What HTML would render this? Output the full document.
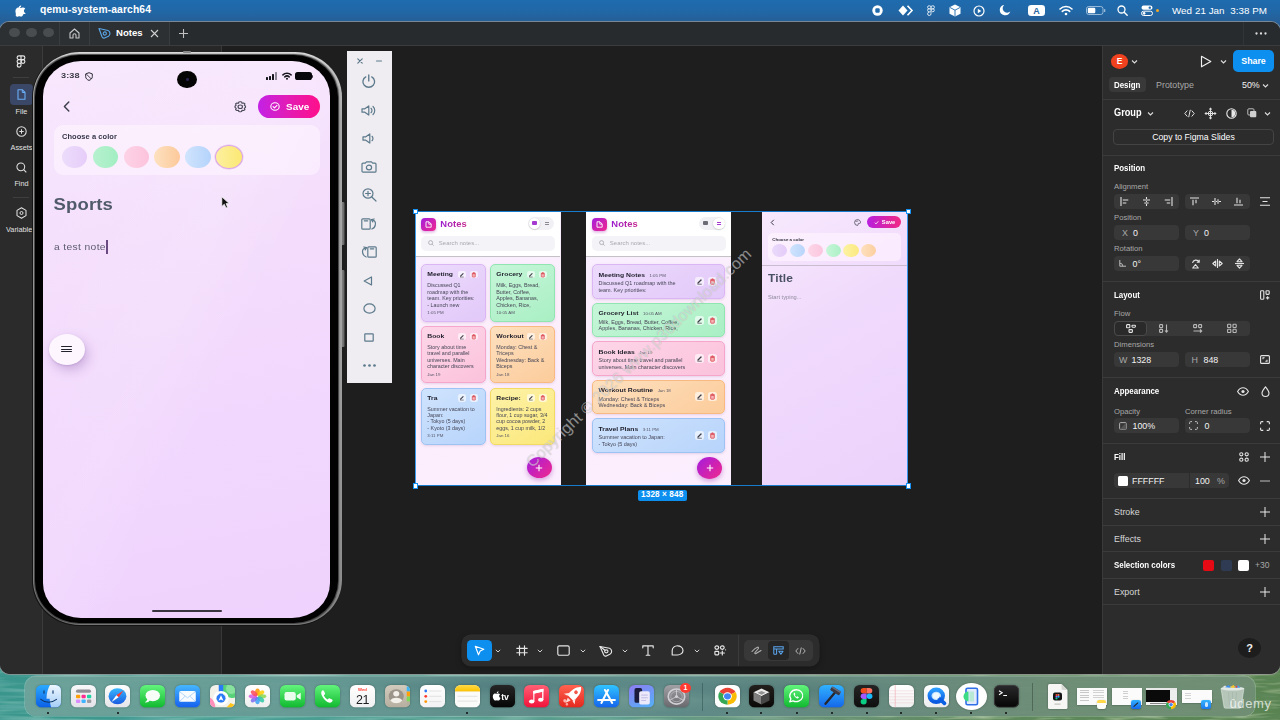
<!DOCTYPE html>
<html><head><meta charset="utf-8">
<style>
*{box-sizing:border-box;margin:0;padding:0}
html,body{width:1280px;height:720px;overflow:hidden}
body{font-family:"Liberation Sans",sans-serif;position:relative;background:#4a9a8e;color:#fff}
.abs{position:absolute}
svg{position:absolute;overflow:visible}
.lab{left:0;width:43px;text-align:center;font-size:7.300px;color:#e0e0e0;white-space:nowrap}
#rail{overflow:hidden}
.tx{font-size:8.900px;line-height:14px;height:14px;white-space:nowrap;color:#f2f2f2;letter-spacing:0;margin-top:.2px}
.tx.b{font-weight:bold;color:#fff;letter-spacing:0;font-size:8.600px;transform:scaleX(.92);transform-origin:0 50%}
.tx.g{color:#a8a8a8}
.tx.l{color:#d6d6d6}
.tx.s{font-size:7.700px;letter-spacing:0;margin-top:.2px}
.ct{white-space:nowrap;transform:scaleY(.89);transform-origin:0 50%}
#canvas{position:absolute;left:0;top:0;width:0;height:0}
/* wallpaper */
#wall{position:absolute;left:0;top:0;width:1280px;height:720px;background:linear-gradient(90deg,#3f9c92 0%,#4fa093 25%,#5b9a84 50%,#5e8f6c 75%,#5a7f52 100%)}
/* menubar */
#menubar{position:absolute;left:0;top:0;width:1280px;height:34px;background:linear-gradient(180deg,#1e6bae 0px,#2167a6 12px,#265e96 22px,#2a5a8c 34px)}
#menubar .t{position:absolute;top:4px;font-size:10px;font-weight:bold;color:#fff;white-space:nowrap}
/* window */
#win{position:absolute;left:0;top:22px;width:1280px;height:652px;background:#1e1e1e;border-radius:9px 9px 10px 10px;overflow:hidden;box-shadow:0 0 0 1px rgba(150,150,150,.75)}
#tabbar{position:absolute;left:0;top:0;width:1280px;height:24px;background:linear-gradient(90deg,#2c3032 0,#2c3032 169px,#272b2d 169px,#272b2d 100%);border-bottom:1px solid #3a3c3e}
#rail{position:absolute;left:0;top:24px;width:43px;height:628px;background:#2b2b2b;border-right:1px solid #3b3b3b}
#lpanel{position:absolute;left:43px;top:24px;width:179px;height:628px;background:#272727;border-right:1px solid #383838}
#rpanel{position:absolute;left:1102px;top:24px;width:178px;height:628px;background:#2c2c2c;border-left:1px solid #3a3a3a;font-size:9.5px;color:#fff}
</style></head><body>
<div id="wall">
<svg style="left:0;top:660px" width="1280" height="60" viewBox="0 0 1280 60">
<defs>
<linearGradient id="wg" x1="0" y1="0" x2="1" y2="0"><stop offset="0" stop-color="#3a968c"/><stop offset=".22" stop-color="#4a9f93"/><stop offset=".45" stop-color="#5f9e8c"/><stop offset=".62" stop-color="#6a9478"/><stop offset=".8" stop-color="#5f8a5c"/><stop offset="1" stop-color="#5a8452"/></linearGradient>
<filter id="wn" x="0" y="0" width="100%" height="100%"><feTurbulence type="fractalNoise" baseFrequency="0.015 0.22" numOctaves="2" seed="4"/><feColorMatrix type="matrix" values="0 0 0 0 .85  0 0 0 0 1  0 0 0 0 .95  1.600 0 0 0 -.62"/></filter>
<filter id="wd" x="0" y="0" width="100%" height="100%"><feTurbulence type="fractalNoise" baseFrequency="0.018 0.2" numOctaves="2" seed="11"/><feColorMatrix type="matrix" values="0 0 0 0 .05  0 0 0 0 .3  0 0 0 0 .3  1.500 0 0 0 -.6"/></filter>
<filter id="wf" x="0" y="0" width="100%" height="100%"><feTurbulence type="fractalNoise" baseFrequency="0.035 0.22" numOctaves="3" seed="7"/><feColorMatrix type="matrix" values="0 0 0 0 .12  0 0 0 0 .25  0 0 0 0 .12  2 0 0 0 -.8"/></filter>
<filter id="wl" x="0" y="0" width="100%" height="100%"><feTurbulence type="fractalNoise" baseFrequency="0.03 0.3" numOctaves="2" seed="21"/><feColorMatrix type="matrix" values="0 0 0 0 .78  0 0 0 0 .85  0 0 0 0 .6  2 0 0 0 -.95"/></filter>
<linearGradient id="mL" x1="0" y1="0" x2="1" y2="0"><stop offset="0" stop-color="#fff"/><stop offset=".5" stop-color="#fff"/><stop offset=".7" stop-color="#000"/></linearGradient>
<linearGradient id="mR" x1="0" y1="0" x2="1" y2="0"><stop offset=".55" stop-color="#000"/><stop offset=".75" stop-color="#fff"/></linearGradient>
<mask id="mkL"><rect width="1280" height="60" fill="url(#mL)"/></mask>
<mask id="mkR"><rect width="1280" height="60" fill="url(#mR)"/></mask>
</defs>
<rect width="1280" height="60" fill="url(#wg)"/>
<g mask="url(#mkL)"><rect width="1280" height="60" filter="url(#wn)" opacity=".55"/><rect width="1280" height="60" filter="url(#wd)" opacity=".5"/></g>
<g mask="url(#mkR)"><rect width="1280" height="60" filter="url(#wf)" opacity=".7"/><rect width="1280" height="60" filter="url(#wl)" opacity=".6"/></g>
</svg>
</div>
<div id="menubar">
<svg style="left:15.300px;top:4.600px" width="10.200" height="11.800" viewBox="0 0 170 200" preserveAspectRatio="none"><path fill="#fff" d="M150 146c-3 8-7 15-12 22-6 9-12 16-15 19-6 6-13 9-20 9-5 0-11-1-18-4s-13-4-19-4-13 1-20 4-12 5-17 5c-7 0-14-3-21-10-4-4-10-11-16-21C5 155 0 143-3 130c-4-15-6-29-6-43 0-16 3-29 10-41 5-9 13-16 22-22s19-8 29-8c6 0 13 2 22 5 9 3 15 5 18 5 2 0 9-2 20-6 11-4 20-5 27-5 20 2 35 9 45 23-18 11-27 26-26 45 0 15 6 28 16 38 5 5 10 8 16 11-1 4-3 7-4 11zM104-22c0 12-4 23-13 33-10 12-23 19-36 18v-4c0-11 5-23 13-33 4-5 10-9 17-12s13-5 19-5c0 1 0 2 0 3z" transform="translate(15,30) scale(.85)"/></svg>
<div class="t" style="left:40px;top:4px;font-size:10.3px;letter-spacing:.12px">qemu-system-aarch64</div>
<!-- right icons -->
<svg style="left:872px;top:5px" width="11" height="11" viewBox="0 0 11 11"><circle cx="5.5" cy="5.5" r="5.2" fill="#fff"/><rect x="3.3" y="3.3" width="4.4" height="4.4" rx="1.2" fill="#2069ab"/></svg>
<svg style="left:898px;top:5px" width="15" height="11" viewBox="0 0 15 11"><path d="M5 .5 9.5 5.5 5 10.500.5 5.500z" fill="#fff"/><path d="M9.500.8 14 5.500 9.500 10.200" fill="none" stroke="#fff" stroke-width="1.600"/></svg>
<svg style="left:927px;top:5px" width="9" height="11" viewBox="0 0 9 11"><g fill="none" stroke="#fff" stroke-width="1" opacity=".85"><rect x=".6" y=".8" width="3.400" height="3" rx="1.400"/><rect x="4" y=".8" width="3.400" height="3" rx="1.400"/><rect x=".6" y="3.800" width="3.400" height="3" rx="1.400"/><path d="M4 6.800v2a1.700 1.700 0 1 1-1.700-1.700"/><circle cx="5.800" cy="5.300" r="1.500"/></g></svg>
<svg style="left:949px;top:4px" width="12" height="13" viewBox="0 0 12 13"><path d="M6 .5 11.500 3.200v6.600L6 12.500.5 9.800V3.200z" fill="#fff"/><path d="M.8 3.400 6 6.200l5.200-2.800M6 6.200v6" stroke="#2069ab" stroke-width=".9" fill="none"/></svg>
<svg style="left:973px;top:4.500px" width="12" height="12" viewBox="0 0 12 12"><circle cx="6" cy="6" r="5" fill="none" stroke="#fff" stroke-width="1.200"/><path d="M4.800 3.800 8.300 6 4.800 8.200z" fill="#fff"/></svg>
<svg style="left:999px;top:4px" width="12" height="12" viewBox="0 0 12 12"><path d="M5.200.9A5.400 5.200 0 1 0 11.300 7.600 4.300 4.200 0 0 1 5.200.9z" fill="#fff"/></svg>
<div class="abs" style="left:1028px;top:4.700px;width:17px;height:11.600px;border-radius:3.300px;background:#fff;color:#2a66a3;font-size:9px;font-weight:bold;text-align:center;line-height:12px">A</div>
<svg style="left:1059px;top:4.500px" width="14" height="11" viewBox="0 0 14 11"><g fill="none" stroke="#fff" stroke-width="1.600" stroke-linecap="round"><path d="M1 4A8.500 8.500 0 0 1 13 4"/><path d="M3.300 6.400a5.200 5.200 0 0 1 7.400 0"/></g><circle cx="7" cy="9" r="1.300" fill="#fff"/></svg>
<svg style="left:1086px;top:6px" width="20" height="9" viewBox="0 0 20 9"><rect x=".5" y=".5" width="16.500" height="8" rx="2.300" fill="none" stroke="#cfe0ef" stroke-width=".9" opacity=".75"/><rect x="1.800" y="1.800" width="7.500" height="5.400" rx="1.200" fill="#fff"/><rect x="18" y="3" width="1.300" height="3" rx=".6" fill="#cfe0ef" opacity=".7"/></svg>
<svg style="left:1117px;top:5px" width="11" height="11" viewBox="0 0 11 11"><circle cx="4.500" cy="4.500" r="3.500" fill="none" stroke="#fff" stroke-width="1.300"/><path d="M7.200 7.200 10.200 10.200" stroke="#fff" stroke-width="1.400" stroke-linecap="round"/></svg>
<svg style="left:1141px;top:5px" width="12" height="11" viewBox="0 0 12 11"><rect x=".5" y=".5" width="11" height="4.300" rx="2.150" fill="#fff"/><circle cx="8.800" cy="2.650" r="1.200" fill="#2069ab"/><rect x=".5" y="6.200" width="11" height="4.300" rx="2.150" fill="none" stroke="#fff" stroke-width="1"/><circle cx="3.100" cy="8.350" r="1.300" fill="#fff"/></svg>
<div class="abs" style="left:1155.500px;top:8.500px;width:3.500px;height:3.500px;border-radius:50%;background:#f5a623"></div>
<div class="t" style="left:1172px;top:4.500px;font-weight:normal;font-size:9.8px;letter-spacing:.05px">Wed 21 Jan&nbsp; 3:38 PM</div>
</div>
<div id="win">
  <div id="tabbar">
<div class="abs" style="left:9px;top:6.1px;width:11px;height:9.400px;border-radius:50%;background:#4a4d50"></div>
<div class="abs" style="left:26px;top:6.1px;width:11px;height:9.400px;border-radius:50%;background:#4a4d50"></div>
<div class="abs" style="left:43px;top:6.1px;width:11px;height:9.400px;border-radius:50%;background:#4a4d50"></div>
<div class="abs" style="left:59px;top:0;width:1px;height:23px;background:#3a3d3f"></div>
<div class="abs" style="left:89px;top:0;width:1px;height:23px;background:#3a3d3f"></div>
<div class="abs" style="left:169px;top:0;width:1px;height:23px;background:#3a3d3f"></div>
<svg style="left:69px;top:5.5px" width="11" height="11" viewBox="0 0 11 11"><path d="M1 5 5.500 1 10 5v5H7V7.200a1.500 1.500 0 0 0-3 0V10H1z" fill="none" stroke="#c8c8c8" stroke-width="1.100" stroke-linejoin="round"/></svg>
<svg style="left:98px;top:5px" width="13" height="12" viewBox="0 0 13 12"><path d="M1 1.500 10 3.500c2.500 1 2.500 4.500.5 5.800L6.500 11c-1 .4-2-.2-2.500-1.200z" fill="none" stroke="#5aa5e8" stroke-width="1.150" stroke-linejoin="round"/><circle cx="6.800" cy="6.500" r="1.600" fill="none" stroke="#5aa5e8" stroke-width="1.100"/></svg>
<div class="abs" style="left:116px;top:5px;font-size:9.600px;font-weight:bold;color:#fff">Notes</div>
<svg style="left:150px;top:7px" width="9" height="9" viewBox="0 0 9 9"><path d="M1 1l7 7M8 1 1 8" stroke="#d0d0d0" stroke-width="1.100"/></svg>
<svg style="left:179px;top:6.5px" width="9" height="9" viewBox="0 0 9 9"><path d="M4.500 0v9M0 4.500h9" stroke="#c0c0c0" stroke-width="1.100"/></svg>
<div class="abs" style="left:1243px;top:0;width:1px;height:23px;background:#323537"></div>
<svg style="left:1255px;top:10px" width="12" height="3" viewBox="0 0 12 3"><circle cx="1.500" cy="1.500" r="1.150" fill="#ddd"/><circle cx="6" cy="1.500" r="1.150" fill="#ddd"/><circle cx="10.500" cy="1.500" r="1.150" fill="#ddd"/></svg>
</div>
  <div id="rail">
<svg style="left:16px;top:9px" width="10" height="13" viewBox="0 0 10 13"><g fill="none" stroke="#e6e6e6" stroke-width="1.150"><path d="M5 .8H3a1.900 1.900 0 0 0 0 3.800h2zM5 .8h2a1.900 1.900 0 0 1 0 3.800H5zM5 4.600H3a1.900 1.900 0 0 0 0 3.800h2zM5 8.400H3a1.900 1.900 0 1 0 2 1.900z"/><circle cx="7" cy="6.500" r="1.900"/></g></svg>
<div class="abs" style="left:13px;top:31px;width:16px;height:1px;background:#3e3e3e"></div>
<div class="abs" style="left:10px;top:38px;width:23px;height:21px;border-radius:4px;background:#3a4766"></div>
<svg style="left:16.500px;top:42.500px" width="9" height="11" viewBox="0 0 9 11"><path d="M1 .8h4.500L8 3.300v7H1z" fill="none" stroke="#6aaef5" stroke-width="1.100" stroke-linejoin="round"/><path d="M5.300.8v2.700H8" fill="none" stroke="#6aaef5" stroke-width="1"/></svg>
<div class="abs lab" style="top:60.500px">File</div>
<svg style="left:15.500px;top:79.500px" width="11" height="11" viewBox="0 0 11 11"><circle cx="5.500" cy="5.500" r="4.700" fill="none" stroke="#e0e0e0" stroke-width="1.050"/><path d="M5.500 3.300v4.400M3.300 5.500h4.400" stroke="#e0e0e0" stroke-width="1.050"/></svg>
<div class="abs lab" style="top:96.500px">Assets</div>
<svg style="left:15.500px;top:115.500px" width="11" height="11" viewBox="0 0 11 11"><circle cx="4.800" cy="4.800" r="3.900" fill="none" stroke="#e0e0e0" stroke-width="1.050"/><path d="M7.700 7.700 10.300 10.300" stroke="#e0e0e0" stroke-width="1.100"/></svg>
<div class="abs lab" style="top:132.500px">Find</div>
<div class="abs" style="left:13px;top:151px;width:16px;height:1px;background:#3e3e3e"></div>
<svg style="left:15.500px;top:161px" width="11" height="12" viewBox="0 0 11 12"><path d="M5.500.8 10 3.400v5.200L5.500 11.200 1 8.600V3.400z" fill="none" stroke="#e0e0e0" stroke-width="1.050" stroke-linejoin="round"/><circle cx="5.500" cy="6" r="1.500" fill="none" stroke="#e0e0e0" stroke-width="1"/></svg>
<div class="abs lab" style="top:178.500px;left:6px;width:60px;text-align:left">Variables</div>
</div>
  <div id="lpanel"></div>
  <div id="rpanel">
<div class="abs" style="left:7.8px;top:8px;width:17.5px;height:15px;border-radius:50%;background:#f2411f;font-size:8.500px;font-weight:bold;text-align:center;line-height:15.500px;color:#fff">E</div>
<svg style="left:28px;top:13px" width="7" height="5" viewBox="0 0 7 5"><path d="M1 1.500 3.500 4 6 1.500" fill="none" stroke="#ddd" stroke-width="1.100"/></svg>
<svg style="left:97px;top:8.5px" width="12" height="13" viewBox="0 0 12 13"><path d="M1.500 1.200 10.800 6.500 1.500 11.800z" fill="none" stroke="#f0f0f0" stroke-width="1.150" stroke-linejoin="round"/></svg>
<svg style="left:117px;top:13px" width="7" height="5" viewBox="0 0 7 5"><path d="M1 1.500 3.500 4 6 1.500" fill="none" stroke="#ddd" stroke-width="1.100"/></svg>
<div class="abs" style="left:130px;top:4px;width:41px;height:22px;border-radius:5px;background:#0d8ff0;font-size:8.800px;text-align:center;line-height:23px;color:#fff;font-weight:bold">Share</div>
<div class="abs" style="left:6px;top:31px;width:37px;height:15px;border-radius:4px;background:#393939"></div>
<div class="abs tx b" style="left:10.5px;top:31.5px;">Design</div>
<div class="abs tx g" style="left:53px;top:31.5px;">Prototype</div>
<div class="abs tx " style="left:139px;top:31.5px;">50%</div>
<svg style="left:158.5px;top:36.5px" width="7" height="5" viewBox="0 0 7 5"><path d="M1 1.500 3.500 4 6 1.500" fill="none" stroke="#ddd" stroke-width="1.100"/></svg>
<div class="abs" style="left:0px;top:53px;width:177px;height:1px;background:#3b3b3b"></div>
<div class="abs tx b" style="left:11px;top:60px;font-size:10px">Group</div>
<svg style="left:44px;top:65px" width="7" height="5" viewBox="0 0 7 5"><path d="M1 1.500 3.500 4 6 1.500" fill="none" stroke="#ddd" stroke-width="1.100"/></svg>
<svg style="left:81px;top:62.5px" width="11" height="9" viewBox="0 0 11 9"><path d="M3.300 1.500.8 4.500l2.500 3M7.700 1.500l2.500 3-2.500 3M6.300.8 4.700 8.200" fill="none" stroke="#e0e0e0" stroke-width="1"/></svg>
<svg style="left:102px;top:61.5px" width="11" height="11" viewBox="0 0 11 11"><g fill="none" stroke="#e0e0e0" stroke-width="1"><circle cx="5.500" cy="5.500" r="2.300"/><path d="M5.500 0v11M0 5.500h11"/><path d="M4 1.500 5.500.2 7 1.500M4 9.500l1.500 1.300L7 9.500M1.500 4 .2 5.500 1.500 7M9.500 4l1.300 1.500L9.500 7"/></g></svg>
<svg style="left:123px;top:61.5px" width="11" height="11" viewBox="0 0 11 11"><circle cx="5.500" cy="5.500" r="4.700" fill="none" stroke="#e8e8e8" stroke-width="1.100"/><path d="M5.500 1.800a3.700 3.700 0 0 1 0 7.400z" fill="#e8e8e8"/></svg>
<svg style="left:144px;top:62px" width="10" height="10" viewBox="0 0 10 10"><rect x=".8" y=".8" width="6.200" height="6.200" rx="1" fill="none" stroke="#bdbdbd" stroke-width="1"/><rect x="3" y="3" width="6.300" height="6.300" rx="1" fill="#cfcfcf"/></svg>
<svg style="left:161px;top:65px" width="7" height="5" viewBox="0 0 7 5"><path d="M1 1.500 3.500 4 6 1.500" fill="none" stroke="#ddd" stroke-width="1.100"/></svg>
<div class="abs" style="left:10px;top:83px;width:161px;height:15.5px;border:1px solid #444;border-radius:4px;text-align:center;line-height:14px;font-size:8.700px;color:#fff;letter-spacing:0">Copy to Figma Slides</div>
<div class="abs" style="left:0px;top:109px;width:177px;height:1px;background:#3b3b3b"></div>
<div class="abs tx b" style="left:11px;top:115px;">Position</div>
<div class="abs tx g s" style="left:11px;top:133.5px;">Alignment</div>
<div class="abs" style="left:11px;top:148px;width:65px;height:15px;background:#383838;border-radius:4px;"></div>
<div class="abs" style="left:82px;top:148px;width:65px;height:15px;background:#383838;border-radius:4px;"></div>
<svg style="left:16.5px;top:151px" width="9" height="9" viewBox="0 0 9 9"><path d="M1 0v9" stroke="#e4e4e4" stroke-width="1.100" fill="none"/><path d="M2.800 3h5.500M2.800 6h3.500" stroke="#e4e4e4" stroke-width="1.100" fill="none"/></svg>
<svg style="left:38.5px;top:151px" width="9" height="9" viewBox="0 0 9 9"><path d="M4.500 0v2M4.500 4v1M4.500 7v2" stroke="#e4e4e4" stroke-width="1.100" fill="none"/><path d="M1 3h7M2.300 6h4.400" stroke="#e4e4e4" stroke-width="1.100" fill="none"/></svg>
<svg style="left:60.5px;top:151px" width="9" height="9" viewBox="0 0 9 9"><path d="M8 0v9" stroke="#e4e4e4" stroke-width="1.100" fill="none"/><path d="M.7 3h5.500M2.700 6h3.500" stroke="#e4e4e4" stroke-width="1.100" fill="none"/></svg>
<svg style="left:86.5px;top:151px" width="9" height="9" viewBox="0 0 9 9"><path d="M0 1h9" stroke="#e4e4e4" stroke-width="1.100" fill="none"/><path d="M3 2.800v5.500M6 2.800v3.500" stroke="#e4e4e4" stroke-width="1.100" fill="none"/></svg>
<svg style="left:108.5px;top:151px" width="9" height="9" viewBox="0 0 9 9"><path d="M0 4.500h2M4 4.500h1M7 4.500h2" stroke="#e4e4e4" stroke-width="1.100" fill="none"/><path d="M3 1v7M6 2.300v4.400" stroke="#e4e4e4" stroke-width="1.100" fill="none"/></svg>
<svg style="left:130.5px;top:151px" width="9" height="9" viewBox="0 0 9 9"><path d="M0 8h9" stroke="#e4e4e4" stroke-width="1.100" fill="none"/><path d="M3 .7v5.500M6 2.700v3.500" stroke="#e4e4e4" stroke-width="1.100" fill="none"/></svg>
<svg style="left:157px;top:151px" width="10" height="9" viewBox="0 0 10 9"><path d="M0 .8h10M0 8.200h10M2.500 4.500h5" stroke="#e4e4e4" stroke-width="1.100" fill="none"/></svg>
<div class="abs tx g s" style="left:11px;top:164.5px;">Position</div>
<div class="abs" style="left:11px;top:179px;width:65px;height:15px;background:#383838;border-radius:4px;"></div>
<div class="abs" style="left:82px;top:179px;width:65px;height:15px;background:#383838;border-radius:4px;"></div>
<div class="abs tx g" style="left:19px;top:179.5px;">X</div>
<div class="abs tx " style="left:30px;top:179.5px;">0</div>
<div class="abs tx g" style="left:90px;top:179.5px;">Y</div>
<div class="abs tx " style="left:101px;top:179.5px;">0</div>
<div class="abs tx g s" style="left:11px;top:195.5px;">Rotation</div>
<div class="abs" style="left:11px;top:210px;width:65px;height:15px;background:#383838;border-radius:4px;"></div>
<div class="abs" style="left:82px;top:210px;width:65px;height:15px;background:#383838;border-radius:4px;"></div>
<svg style="left:16px;top:214px" width="7" height="7" viewBox="0 0 7 7"><path d="M.8 0v6.200H7" fill="none" stroke="#bdbdbd" stroke-width="1"/><path d="M.8 3.200a3 3 0 0 1 3 3" fill="none" stroke="#bdbdbd" stroke-width=".9"/></svg>
<div class="abs tx " style="left:29.5px;top:210.5px;">0°</div>
<svg style="left:88px;top:212.5px" width="9" height="10" viewBox="0 0 9 10"><path d="M1.500 3.800a3.500 3.500 0 0 1 6.500-.8M8.200.8v2.400H5.800" stroke="#e4e4e4" stroke-width="1.100" fill="none"/><path d="M4.500 5.500 7.300 9H1.700z" stroke="#e4e4e4" stroke-width="1.100" fill="none" stroke-linejoin="round"/></svg>
<svg style="left:108.5px;top:213px" width="11" height="9" viewBox="0 0 11 9"><path d="M5.500 0v9" stroke="#e4e4e4" stroke-width="1.100" fill="none"/><path d="M3.700 2v5L.8 4.500zM7.300 2v5l2.900-2.500z" stroke="#e4e4e4" stroke-width="1.100" fill="none" stroke-linejoin="round"/></svg>
<svg style="left:131.5px;top:212px" width="9" height="11" viewBox="0 0 9 11"><path d="M0 5.500h9" stroke="#e4e4e4" stroke-width="1.100" fill="none"/><path d="M2 3.700h5L4.500.8zM2 7.300h5l-2.500 2.900z" stroke="#e4e4e4" stroke-width="1.100" fill="none" stroke-linejoin="round"/></svg>
<div class="abs" style="left:0px;top:235px;width:177px;height:1px;background:#3b3b3b"></div>
<div class="abs tx b" style="left:11px;top:242px;">Layout</div>
<svg style="left:156.5px;top:244px" width="10" height="10" viewBox="0 0 10 10"><rect x=".6" y=".8" width="3.200" height="8.400" rx=".8" stroke="#e4e4e4" stroke-width="1.100" fill="none"/><rect x="6" y=".8" width="3.200" height="3.600" rx=".8" stroke="#e4e4e4" stroke-width="1.100" fill="none"/><path d="M7.600 6.200v3.400M5.900 7.900h3.400" stroke="#e4e4e4" stroke-width="1.100" fill="none"/></svg>
<div class="abs tx g s" style="left:11px;top:260.5px;">Flow</div>
<div class="abs" style="left:11px;top:275px;width:136px;height:15px;background:#383838;border-radius:4px;"></div>
<div class="abs" style="left:11px;top:275px;width:33px;height:15px;background:#2a2a2a;border:1px solid #4a4a4a;border-radius:4px"></div>
<svg style="left:23px;top:278px" width="10" height="9" viewBox="0 0 10 9"><rect x=".6" y=".6" width="3.200" height="3.200" rx=".6" stroke="#e4e4e4" stroke-width="1.100" fill="none"/><rect x="6" y="1.200" width="3.400" height="2" rx=".6" stroke="#e4e4e4" stroke-width="1.100" fill="none"/><rect x="3" y="5.600" width="3.400" height="2.800" rx=".6" stroke="#e4e4e4" stroke-width="1.100" fill="none"/></svg>
<svg style="left:56px;top:278px" width="10" height="9" viewBox="0 0 10 9"><rect x=".6" y=".6" width="3" height="3" rx=".6" stroke="#b8b8b8" stroke-width="1.100" fill="none"/><rect x=".6" y="5.400" width="3" height="3" rx=".6" stroke="#b8b8b8" stroke-width="1.100" fill="none"/><path d="M7.500.5v7.500M6 6.500 7.500 8.200 9 6.500" stroke="#b8b8b8" stroke-width="1.100" fill="none"/></svg>
<svg style="left:90px;top:278px" width="10" height="9" viewBox="0 0 10 9"><rect x=".6" y=".6" width="3" height="3" rx=".6" stroke="#b8b8b8" stroke-width="1.100" fill="none"/><rect x="5.600" y=".6" width="3" height="3" rx=".6" stroke="#b8b8b8" stroke-width="1.100" fill="none"/><path d="M.5 7h8M7 5.500 8.700 7 7 8.500" stroke="#b8b8b8" stroke-width="1.100" fill="none"/></svg>
<svg style="left:124px;top:278px" width="10" height="9" viewBox="0 0 10 9"><rect x=".6" y=".3" width="3.200" height="3.200" rx=".6" stroke="#b8b8b8" stroke-width="1.100" fill="none"/><rect x="6" y=".3" width="3.200" height="3.200" rx=".6" stroke="#b8b8b8" stroke-width="1.100" fill="none"/><rect x=".6" y="5.300" width="3.200" height="3.200" rx=".6" stroke="#b8b8b8" stroke-width="1.100" fill="none"/><rect x="6" y="5.300" width="3.200" height="3.200" rx=".6" stroke="#b8b8b8" stroke-width="1.100" fill="none"/></svg>
<div class="abs tx g s" style="left:11px;top:291.5px;">Dimensions</div>
<div class="abs" style="left:11px;top:306px;width:65px;height:15px;background:#383838;border-radius:4px;"></div>
<div class="abs" style="left:82px;top:306px;width:65px;height:15px;background:#383838;border-radius:4px;"></div>
<div class="abs tx g" style="left:16px;top:306.5px;">W</div>
<div class="abs tx " style="left:28.5px;top:306.5px;">1328</div>
<div class="abs tx g" style="left:88.5px;top:306.5px;">H</div>
<div class="abs tx " style="left:100.5px;top:306.5px;">848</div>
<svg style="left:156.5px;top:309px" width="10" height="9" viewBox="0 0 10 9"><rect x=".6" y=".6" width="8.800" height="7.800" rx="1" stroke="#e4e4e4" stroke-width="1.100" fill="none"/><path d="M3 4.200V2.800h1.600M7 4.800v1.400H5.400" stroke="#e4e4e4" stroke-width="1.100" fill="none"/></svg>
<div class="abs" style="left:0px;top:331px;width:177px;height:1px;background:#3b3b3b"></div>
<div class="abs tx b" style="left:11px;top:338px;">Appearance</div>
<svg style="left:134px;top:340.5px" width="12" height="9" viewBox="0 0 12 9"><path d="M.6 4.500C2 2 3.700.8 6 .8s4 1.200 5.400 3.700C10 7 8.300 8.200 6 8.200S2 7 .6 4.500z" stroke="#e4e4e4" stroke-width="1.100" fill="none"/><circle cx="6" cy="4.500" r="1.600" fill="#e4e4e4"/></svg>
<svg style="left:157.5px;top:339.5px" width="9" height="11" viewBox="0 0 9 11"><path d="M4.500.8C6.500 3.500 8 5.200 8 7a3.500 3.500 0 0 1-7 0c0-1.800 1.500-3.500 3.500-6.200z" stroke="#e4e4e4" stroke-width="1.100" fill="none" stroke-linejoin="round"/></svg>
<div class="abs tx g s" style="left:11px;top:358.5px;">Opacity</div>
<div class="abs tx g s" style="left:82px;top:358.5px;">Corner radius</div>
<div class="abs" style="left:11px;top:372px;width:65px;height:15px;background:#383838;border-radius:4px;"></div>
<div class="abs" style="left:82px;top:372px;width:65px;height:15px;background:#383838;border-radius:4px;"></div>
<svg style="left:16px;top:375.5px" width="8" height="8" viewBox="0 0 8 8"><rect x=".6" y=".6" width="6.800" height="6.800" rx="1" fill="none" stroke="#bdbdbd" stroke-width=".9"/><path d="M.6 7.400 7.400.6V7.400z" fill="#555"/></svg>
<div class="abs tx " style="left:29.5px;top:372.5px;">100%</div>
<svg style="left:86px;top:375px" width="9" height="9" viewBox="0 0 9 9"><path d="M.6 3V1.600a1 1 0 0 1 1-1H3M6 .6h1.400a1 1 0 0 1 1 1V3M8.400 6v1.400a1 1 0 0 1-1 1H6M3 8.400H1.600a1 1 0 0 1-1-1V6" fill="none" stroke="#bdbdbd" stroke-width="1"/></svg>
<div class="abs tx " style="left:101.5px;top:372.5px;">0</div>
<svg style="left:157px;top:374.5px" width="10" height="10" viewBox="0 0 10 10"><path d="M.6 3.300V1.800A1.200 1.200 0 0 1 1.800.6h1.500M6.700.6h1.500a1.200 1.200 0 0 1 1.200 1.200v1.500M9.400 6.700v1.500a1.200 1.200 0 0 1-1.200 1.200H6.700M3.300 9.400H1.800A1.200 1.200 0 0 1 .6 8.200V6.700" fill="none" stroke="#e4e4e4" stroke-width="1.100"/></svg>
<div class="abs" style="left:0px;top:397px;width:177px;height:1px;background:#3b3b3b"></div>
<div class="abs tx b" style="left:11px;top:404px;">Fill</div>
<svg style="left:135.5px;top:406px" width="10" height="10" viewBox="0 0 10 10"><circle cx="2.300" cy="2.300" r="1.600" stroke="#e4e4e4" stroke-width="1.100" fill="none"/><circle cx="7.700" cy="2.300" r="1.600" stroke="#e4e4e4" stroke-width="1.100" fill="none"/><circle cx="2.300" cy="7.700" r="1.600" stroke="#e4e4e4" stroke-width="1.100" fill="none"/><circle cx="7.700" cy="7.700" r="1.600" stroke="#e4e4e4" stroke-width="1.100" fill="none"/></svg>
<svg style="left:157px;top:406px" width="10" height="10" viewBox="0 0 10 10"><path d="M5 0v10M0 5h10" stroke="#e8e8e8" stroke-width="1"/></svg>
<div class="abs" style="left:11px;top:427px;width:115px;height:15px;background:#383838;border-radius:4px;"></div>
<div class="abs" style="left:14.5px;top:429.5px;width:10px;height:10px;background:#fff;border-radius:1.500px"></div>
<div class="abs tx " style="left:29px;top:427.5px;">FFFFFF</div>
<div class="abs" style="left:86px;top:427px;width:1px;height:15px;background:#2c2c2c"></div>
<div class="abs tx " style="left:92px;top:427.5px;">100</div>
<div class="abs tx g" style="left:114px;top:427.5px;">%</div>
<svg style="left:134.5px;top:430px" width="12" height="9" viewBox="0 0 12 9"><path d="M.6 4.500C2 2 3.700.8 6 .8s4 1.200 5.400 3.700C10 7 8.300 8.200 6 8.200S2 7 .6 4.500z" stroke="#e4e4e4" stroke-width="1.100" fill="none"/><circle cx="6" cy="4.500" r="1.600" fill="#e4e4e4"/></svg>
<svg style="left:157px;top:433.5px" width="10" height="2" viewBox="0 0 10 2"><path d="M0 1h10" stroke="#bdbdbd" stroke-width="1"/></svg>
<div class="abs" style="left:0px;top:452px;width:177px;height:1px;background:#3b3b3b"></div>
<div class="abs tx l" style="left:11px;top:459px;">Stroke</div>
<svg style="left:157px;top:461px" width="10" height="10" viewBox="0 0 10 10"><path d="M5 0v10M0 5h10" stroke="#e8e8e8" stroke-width="1"/></svg>
<div class="abs" style="left:0px;top:479px;width:177px;height:1px;background:#3b3b3b"></div>
<div class="abs tx l" style="left:11px;top:485.5px;">Effects</div>
<svg style="left:157px;top:487.5px" width="10" height="10" viewBox="0 0 10 10"><path d="M5 0v10M0 5h10" stroke="#e8e8e8" stroke-width="1"/></svg>
<div class="abs" style="left:0px;top:505px;width:177px;height:1px;background:#3b3b3b"></div>
<div class="abs tx b" style="left:11px;top:512px;">Selection colors</div>
<div class="abs" style="left:100px;top:513.5px;width:11px;height:11px;background:#e60a14;border-radius:2px"></div>
<div class="abs" style="left:118px;top:513.5px;width:11px;height:11px;background:#2e3b52;border-radius:2px"></div>
<div class="abs" style="left:135px;top:513.5px;width:11px;height:11px;background:#fff;border-radius:2px"></div>
<div class="abs tx g" style="left:152px;top:512px;font-size:8.500px">+30</div>
<div class="abs" style="left:0px;top:532px;width:177px;height:1px;background:#3b3b3b"></div>
<div class="abs tx l" style="left:11px;top:538.5px;">Export</div>
<svg style="left:157px;top:540.5px" width="10" height="10" viewBox="0 0 10 10"><path d="M5 0v10M0 5h10" stroke="#e8e8e8" stroke-width="1"/></svg>
<div class="abs" style="left:0px;top:558px;width:177px;height:1px;background:#3b3b3b"></div>
<div class="abs" style="left:135px;top:591.7px;width:23px;height:20px;border-radius:50%;background:#1d1d1d;text-align:center;line-height:20.500px;font-size:11px;font-weight:bold;color:#f0f0f0">?</div>
</div>
</div>
<div id="canvas">
<div class="abs " style="left:415.4px;top:212px;width:145.8px;height:273.3px;background:linear-gradient(160deg,#f6efff 0%,#fdeefb 45%,#fbeefe 100%)"></div>
<div class="abs " style="left:415.3px;top:212px;width:145.2px;height:44px;background:#fff"></div>
<div class="abs " style="left:415.3px;top:256px;width:145.2px;height:1px;background:#c4c2c6"></div>
<div class="abs " style="left:421.3px;top:217.5px;width:14.5px;height:13px;background:linear-gradient(135deg,#a21de0 0%,#d022b0 55%,#ee2a8e 100%);border-radius:4px;box-shadow:0 1.500px 3px rgba(160,40,180,.35)"></div>
<svg style="left:425px;top:220.5px" width="7" height="7" viewBox="0 0 7 7"><path d="M1 .8h3L6.200 3v3.200H1z" fill="none" stroke="#fff" stroke-width=".9" stroke-linejoin="round"/><path d="M3.800 1v2.200H6" fill="none" stroke="#fff" stroke-width=".8"/></svg>
<div class="abs ct" style="left:440.3px;top:217.89px;font-size:9.4px;line-height:12.22px;font-weight:bold;color:#a41cc6;letter-spacing:.1px;background:linear-gradient(90deg,#9a1cd0,#c4268c);-webkit-background-clip:text;background-clip:text;-webkit-text-fill-color:transparent">Notes</div>
<div class="abs " style="left:528.3px;top:217px;width:26px;height:12.5px;background:#f1f0f4;border-radius:6.500px"></div>
<div class="abs " style="left:528.8px;top:217.5px;width:11.5px;height:11.5px;background:#fff;border-radius:50%;box-shadow:0 .5px 1.500px rgba(0,0,0,.25)"></div>
<div class="abs " style="left:532.3px;top:221px;width:4.8px;height:4.3px;background:#a43ad0;border-radius:1px"></div>
<div class="abs " style="left:544.8px;top:222px;width:4.5px;height:0.9px;background:#8a8a92"></div>
<div class="abs " style="left:544.8px;top:223.8px;width:4.5px;height:0.9px;background:#8a8a92"></div>
<div class="abs " style="left:421.3px;top:236px;width:133.5px;height:14.5px;background:#f4f3f7;border-radius:5px"></div>
<svg style="left:427.6px;top:240.3px" width="6" height="6" viewBox="0 0 6 6"><circle cx="2.600" cy="2.600" r="2" fill="none" stroke="#9a9aa4" stroke-width=".7"/><path d="M4.100 4.100 5.600 5.600" stroke="#9a9aa4" stroke-width=".7"/></svg>
<div class="abs ct" style="left:438.8px;top:240.1px;font-size:6px;line-height:7.8px;color:#a9a9b2">Search notes...</div>
<div class="abs " style="left:421px;top:264.4px;width:64.5px;height:57.3px;background:linear-gradient(150deg,#ecdafc,#e2c9f9);border:1px solid #dbb6f4;border-radius:5px;box-shadow:0 1px 2.500px rgba(120,80,140,.18)"></div>
<div class="abs ct" style="left:427.3px;top:270.48px;font-size:6.8px;line-height:8.84px;font-weight:bold;color:#1c1c28">Meeting</div>
<div class="abs " style="left:458px;top:270.9px;width:7.6px;height:7.6px;background:rgba(255,255,255,.62);border-radius:2.128px"></div>
<div class="abs " style="left:470px;top:270.9px;width:7.6px;height:7.6px;background:rgba(255,255,255,.62);border-radius:2.128px"></div>
<svg style="left:458px;top:270.9px" width="7.6" height="7.6" viewBox="0 0 9 9"><path d="M3 6 6 3" fill="none" stroke="#3e3e48" stroke-width="1.300" stroke-linecap="round"/><path d="M2.400 7.200h4.400" fill="none" stroke="#3e3e48" stroke-width=".7"/></svg>
<svg style="left:470px;top:270.9px" width="7.6" height="7.6" viewBox="0 0 9 9"><path d="M2.700 3.300h3.600v3.300a.6.600 0 0 1-.6.600H3.300a.6.600 0 0 1-.6-.6zM2.200 2.800h4.600M3.800 2.600v-.7h1.400v.7" fill="#f6b4b8" stroke="#d8323c" stroke-width=".7"/></svg>
<div class="abs ct" style="left:427.3px;top:282.22px;font-size:5.35px;line-height:6.96px;color:#454555">Discussed Q1</div>
<div class="abs ct" style="left:427.3px;top:288.67px;font-size:5.35px;line-height:6.96px;color:#454555">roadmap with the</div>
<div class="abs ct" style="left:427.3px;top:295.12px;font-size:5.35px;line-height:6.96px;color:#454555">team. Key priorities:</div>
<div class="abs ct" style="left:427.3px;top:301.57px;font-size:5.35px;line-height:6.96px;color:#454555">- Launch new</div>
<div class="abs ct" style="left:427.3px;top:310.04px;font-size:4.4px;line-height:5.72px;color:#555565">1:05 PM</div>
<div class="abs " style="left:490px;top:264.4px;width:64.5px;height:57.3px;background:linear-gradient(150deg,#c6f6d8,#a9efc4);border:1px solid #90e5b0;border-radius:5px;box-shadow:0 1px 2.500px rgba(120,80,140,.18)"></div>
<div class="abs ct" style="left:496.3px;top:270.48px;font-size:6.8px;line-height:8.84px;font-weight:bold;color:#1c1c28">Grocery</div>
<div class="abs " style="left:527px;top:270.9px;width:7.6px;height:7.6px;background:rgba(255,255,255,.62);border-radius:2.128px"></div>
<div class="abs " style="left:539px;top:270.9px;width:7.6px;height:7.6px;background:rgba(255,255,255,.62);border-radius:2.128px"></div>
<svg style="left:527px;top:270.9px" width="7.6" height="7.6" viewBox="0 0 9 9"><path d="M3 6 6 3" fill="none" stroke="#3e3e48" stroke-width="1.300" stroke-linecap="round"/><path d="M2.400 7.200h4.400" fill="none" stroke="#3e3e48" stroke-width=".7"/></svg>
<svg style="left:539px;top:270.9px" width="7.6" height="7.6" viewBox="0 0 9 9"><path d="M2.700 3.300h3.600v3.300a.6.600 0 0 1-.6.600H3.300a.6.600 0 0 1-.6-.6zM2.200 2.800h4.600M3.800 2.600v-.7h1.400v.7" fill="#f6b4b8" stroke="#d8323c" stroke-width=".7"/></svg>
<div class="abs ct" style="left:496.3px;top:282.22px;font-size:5.35px;line-height:6.96px;color:#454555">Milk, Eggs, Bread,</div>
<div class="abs ct" style="left:496.3px;top:288.67px;font-size:5.35px;line-height:6.96px;color:#454555">Butter, Coffee,</div>
<div class="abs ct" style="left:496.3px;top:295.12px;font-size:5.35px;line-height:6.96px;color:#454555">Apples, Bananas,</div>
<div class="abs ct" style="left:496.3px;top:301.57px;font-size:5.35px;line-height:6.96px;color:#454555">Chicken, Rice,</div>
<div class="abs ct" style="left:496.3px;top:310.04px;font-size:4.4px;line-height:5.72px;color:#555565">10:05 AM</div>
<div class="abs " style="left:421px;top:326px;width:64.5px;height:57.3px;background:linear-gradient(150deg,#fdd6e8,#fbc2dc);border:1px solid #f6a6ca;border-radius:5px;box-shadow:0 1px 2.500px rgba(120,80,140,.18)"></div>
<div class="abs ct" style="left:427.3px;top:332.08px;font-size:6.8px;line-height:8.84px;font-weight:bold;color:#1c1c28">Book</div>
<div class="abs " style="left:458px;top:332.5px;width:7.6px;height:7.6px;background:rgba(255,255,255,.62);border-radius:2.128px"></div>
<div class="abs " style="left:470px;top:332.5px;width:7.6px;height:7.6px;background:rgba(255,255,255,.62);border-radius:2.128px"></div>
<svg style="left:458px;top:332.5px" width="7.6" height="7.6" viewBox="0 0 9 9"><path d="M3 6 6 3" fill="none" stroke="#3e3e48" stroke-width="1.300" stroke-linecap="round"/><path d="M2.400 7.200h4.400" fill="none" stroke="#3e3e48" stroke-width=".7"/></svg>
<svg style="left:470px;top:332.5px" width="7.6" height="7.6" viewBox="0 0 9 9"><path d="M2.700 3.300h3.600v3.300a.6.600 0 0 1-.6.600H3.300a.6.600 0 0 1-.6-.6zM2.200 2.800h4.600M3.800 2.600v-.7h1.400v.7" fill="#f6b4b8" stroke="#d8323c" stroke-width=".7"/></svg>
<div class="abs ct" style="left:427.3px;top:343.82px;font-size:5.35px;line-height:6.96px;color:#454555">Story about time</div>
<div class="abs ct" style="left:427.3px;top:350.27px;font-size:5.35px;line-height:6.96px;color:#454555">travel and parallel</div>
<div class="abs ct" style="left:427.3px;top:356.72px;font-size:5.35px;line-height:6.96px;color:#454555">universes. Main</div>
<div class="abs ct" style="left:427.3px;top:363.17px;font-size:5.35px;line-height:6.96px;color:#454555">character discovers</div>
<div class="abs ct" style="left:427.3px;top:371.64px;font-size:4.4px;line-height:5.72px;color:#555565">Jan 19</div>
<div class="abs " style="left:490px;top:326px;width:64.5px;height:57.3px;background:linear-gradient(150deg,#fde0bf,#fccc9b);border:1px solid #f8ba80;border-radius:5px;box-shadow:0 1px 2.500px rgba(120,80,140,.18)"></div>
<div class="abs ct" style="left:496.3px;top:332.08px;font-size:6.8px;line-height:8.84px;font-weight:bold;color:#1c1c28">Workout</div>
<div class="abs " style="left:527px;top:332.5px;width:7.6px;height:7.6px;background:rgba(255,255,255,.62);border-radius:2.128px"></div>
<div class="abs " style="left:539px;top:332.5px;width:7.6px;height:7.6px;background:rgba(255,255,255,.62);border-radius:2.128px"></div>
<svg style="left:527px;top:332.5px" width="7.6" height="7.6" viewBox="0 0 9 9"><path d="M3 6 6 3" fill="none" stroke="#3e3e48" stroke-width="1.300" stroke-linecap="round"/><path d="M2.400 7.200h4.400" fill="none" stroke="#3e3e48" stroke-width=".7"/></svg>
<svg style="left:539px;top:332.5px" width="7.6" height="7.6" viewBox="0 0 9 9"><path d="M2.700 3.300h3.600v3.300a.6.600 0 0 1-.6.600H3.300a.6.600 0 0 1-.6-.6zM2.200 2.800h4.600M3.800 2.600v-.7h1.400v.7" fill="#f6b4b8" stroke="#d8323c" stroke-width=".7"/></svg>
<div class="abs ct" style="left:496.3px;top:343.82px;font-size:5.35px;line-height:6.96px;color:#454555">Monday: Chest &amp;</div>
<div class="abs ct" style="left:496.3px;top:350.27px;font-size:5.35px;line-height:6.96px;color:#454555">Triceps</div>
<div class="abs ct" style="left:496.3px;top:356.72px;font-size:5.35px;line-height:6.96px;color:#454555">Wednesday: Back &amp;</div>
<div class="abs ct" style="left:496.3px;top:363.17px;font-size:5.35px;line-height:6.96px;color:#454555">Biceps</div>
<div class="abs ct" style="left:496.3px;top:371.64px;font-size:4.4px;line-height:5.72px;color:#555565">Jan 18</div>
<div class="abs " style="left:421px;top:387.7px;width:64.5px;height:57.3px;background:linear-gradient(150deg,#cfe3fd,#b7d4fb);border:1px solid #9cc3f4;border-radius:5px;box-shadow:0 1px 2.500px rgba(120,80,140,.18)"></div>
<div class="abs ct" style="left:427.3px;top:393.78px;font-size:6.8px;line-height:8.84px;font-weight:bold;color:#1c1c28">Tra</div>
<div class="abs " style="left:458px;top:394.2px;width:7.6px;height:7.6px;background:rgba(255,255,255,.62);border-radius:2.128px"></div>
<div class="abs " style="left:470px;top:394.2px;width:7.6px;height:7.6px;background:rgba(255,255,255,.62);border-radius:2.128px"></div>
<svg style="left:458px;top:394.2px" width="7.6" height="7.6" viewBox="0 0 9 9"><path d="M3 6 6 3" fill="none" stroke="#3e3e48" stroke-width="1.300" stroke-linecap="round"/><path d="M2.400 7.200h4.400" fill="none" stroke="#3e3e48" stroke-width=".7"/></svg>
<svg style="left:470px;top:394.2px" width="7.6" height="7.6" viewBox="0 0 9 9"><path d="M2.700 3.300h3.600v3.300a.6.600 0 0 1-.6.600H3.300a.6.600 0 0 1-.6-.6zM2.200 2.800h4.600M3.800 2.600v-.7h1.400v.7" fill="#f6b4b8" stroke="#d8323c" stroke-width=".7"/></svg>
<div class="abs ct" style="left:427.3px;top:405.52px;font-size:5.35px;line-height:6.96px;color:#454555">Summer vacation to</div>
<div class="abs ct" style="left:427.3px;top:411.97px;font-size:5.35px;line-height:6.96px;color:#454555">Japan:</div>
<div class="abs ct" style="left:427.3px;top:418.42px;font-size:5.35px;line-height:6.96px;color:#454555">- Tokyo (5 days)</div>
<div class="abs ct" style="left:427.3px;top:424.87px;font-size:5.35px;line-height:6.96px;color:#454555">- Kyoto (3 days)</div>
<div class="abs ct" style="left:427.3px;top:433.34px;font-size:4.4px;line-height:5.72px;color:#555565">3:11 PM</div>
<div class="abs " style="left:490px;top:387.7px;width:64.5px;height:57.3px;background:linear-gradient(150deg,#fdf2a8,#fbe87a);border:1px solid #f3da62;border-radius:5px;box-shadow:0 1px 2.500px rgba(120,80,140,.18)"></div>
<div class="abs ct" style="left:496.3px;top:393.78px;font-size:6.8px;line-height:8.84px;font-weight:bold;color:#1c1c28">Recipe:</div>
<div class="abs " style="left:527px;top:394.2px;width:7.6px;height:7.6px;background:rgba(255,255,255,.62);border-radius:2.128px"></div>
<div class="abs " style="left:539px;top:394.2px;width:7.6px;height:7.6px;background:rgba(255,255,255,.62);border-radius:2.128px"></div>
<svg style="left:527px;top:394.2px" width="7.6" height="7.6" viewBox="0 0 9 9"><path d="M3 6 6 3" fill="none" stroke="#3e3e48" stroke-width="1.300" stroke-linecap="round"/><path d="M2.400 7.200h4.400" fill="none" stroke="#3e3e48" stroke-width=".7"/></svg>
<svg style="left:539px;top:394.2px" width="7.6" height="7.6" viewBox="0 0 9 9"><path d="M2.700 3.300h3.600v3.300a.6.600 0 0 1-.6.600H3.300a.6.600 0 0 1-.6-.6zM2.200 2.800h4.600M3.800 2.600v-.7h1.400v.7" fill="#f6b4b8" stroke="#d8323c" stroke-width=".7"/></svg>
<div class="abs ct" style="left:496.3px;top:405.52px;font-size:5.35px;line-height:6.96px;color:#454555">Ingredients: 2 cups</div>
<div class="abs ct" style="left:496.3px;top:411.97px;font-size:5.35px;line-height:6.96px;color:#454555">flour, 1 cup sugar, 3/4</div>
<div class="abs ct" style="left:496.3px;top:418.42px;font-size:5.35px;line-height:6.96px;color:#454555">cup cocoa powder, 2</div>
<div class="abs ct" style="left:496.3px;top:424.87px;font-size:5.35px;line-height:6.96px;color:#454555">eggs, 1 cup milk, 1/2</div>
<div class="abs ct" style="left:496.3px;top:433.34px;font-size:4.4px;line-height:5.72px;color:#555565">Jan 16</div>
<div class="abs " style="left:526.6px;top:456.8px;width:25px;height:21.5px;background:linear-gradient(135deg,#a21de0 0%,#d022b0 55%,#ee2a8e 100%);border-radius:50%;box-shadow:0 2px 5px rgba(150,40,170,.4)"></div>
<svg style="left:535.1px;top:463.75px" width="8" height="7.5" viewBox="0 0 8 7.5"><path d="M4 .8v6.400M.8 4h6.400" stroke="#fff" stroke-width="1.100"/></svg>
<div class="abs " style="left:586.2px;top:212px;width:145.2px;height:273.3px;background:linear-gradient(160deg,#f6efff 0%,#fdeefb 45%,#fbeefe 100%)"></div>
<div class="abs " style="left:586.3px;top:212px;width:145.2px;height:44px;background:#fff"></div>
<div class="abs " style="left:586.3px;top:256px;width:145.2px;height:1px;background:#c4c2c6"></div>
<div class="abs " style="left:592.3px;top:217.5px;width:14.5px;height:13px;background:linear-gradient(135deg,#a21de0 0%,#d022b0 55%,#ee2a8e 100%);border-radius:4px;box-shadow:0 1.500px 3px rgba(160,40,180,.35)"></div>
<svg style="left:596px;top:220.5px" width="7" height="7" viewBox="0 0 7 7"><path d="M1 .8h3L6.200 3v3.200H1z" fill="none" stroke="#fff" stroke-width=".9" stroke-linejoin="round"/><path d="M3.800 1v2.200H6" fill="none" stroke="#fff" stroke-width=".8"/></svg>
<div class="abs ct" style="left:611.3px;top:217.89px;font-size:9.4px;line-height:12.22px;font-weight:bold;color:#a41cc6;letter-spacing:.1px;background:linear-gradient(90deg,#9a1cd0,#c4268c);-webkit-background-clip:text;background-clip:text;-webkit-text-fill-color:transparent">Notes</div>
<div class="abs " style="left:699.3px;top:217px;width:26px;height:12.5px;background:#f1f0f4;border-radius:6.500px"></div>
<div class="abs " style="left:713.3px;top:217.5px;width:11.5px;height:11.5px;background:#fff;border-radius:50%;box-shadow:0 .5px 1.500px rgba(0,0,0,.25)"></div>
<div class="abs " style="left:703.3px;top:221px;width:4.8px;height:4.3px;background:#6b6b76;border-radius:1px"></div>
<div class="abs " style="left:716.8px;top:222px;width:4.5px;height:0.9px;background:#a43ad0"></div>
<div class="abs " style="left:716.8px;top:223.8px;width:4.5px;height:0.9px;background:#a43ad0"></div>
<div class="abs " style="left:592.3px;top:236px;width:133.5px;height:14.5px;background:#f4f3f7;border-radius:5px"></div>
<svg style="left:598.6px;top:240.3px" width="6" height="6" viewBox="0 0 6 6"><circle cx="2.600" cy="2.600" r="2" fill="none" stroke="#9a9aa4" stroke-width=".7"/><path d="M4.100 4.100 5.600 5.600" stroke="#9a9aa4" stroke-width=".7"/></svg>
<div class="abs ct" style="left:609.8px;top:240.1px;font-size:6px;line-height:7.8px;color:#a9a9b2">Search notes...</div>
<div class="abs " style="left:591.8px;top:264.4px;width:133.6px;height:34.4px;background:linear-gradient(150deg,#ecdafc,#e2c9f9);border:1px solid #dbb6f4;border-radius:5px;box-shadow:0 1px 2.500px rgba(120,80,140,.18)"></div>
<div class="abs ct" style="left:598.5px;top:270.9px;font-size:6.800px;line-height:8px;font-weight:bold;color:#1c1c28">Meeting Notes<span style="font-weight:normal;font-size:4.400px;color:#555565;margin-left:4.500px">1:05 PM</span></div>
<div class="abs ct" style="left:598.5px;top:280.355px;font-size:5.45px;line-height:7.09px;color:#454555">Discussed Q1 roadmap with the</div>
<div class="abs ct" style="left:598.5px;top:286.855px;font-size:5.45px;line-height:7.09px;color:#454555">team. Key priorities:</div>
<div class="abs " style="left:694.9px;top:277.1px;width:9px;height:9px;background:rgba(255,255,255,.62);border-radius:2.52px"></div>
<div class="abs " style="left:707.9px;top:277.1px;width:9px;height:9px;background:rgba(255,255,255,.62);border-radius:2.52px"></div>
<svg style="left:694.9px;top:277.1px" width="9" height="9" viewBox="0 0 9 9"><path d="M3 6 6 3" fill="none" stroke="#3e3e48" stroke-width="1.300" stroke-linecap="round"/><path d="M2.400 7.200h4.400" fill="none" stroke="#3e3e48" stroke-width=".7"/></svg>
<svg style="left:707.9px;top:277.1px" width="9" height="9" viewBox="0 0 9 9"><path d="M2.700 3.300h3.600v3.300a.6.600 0 0 1-.6.600H3.300a.6.600 0 0 1-.6-.6zM2.200 2.800h4.600M3.800 2.600v-.7h1.400v.7" fill="#f6b4b8" stroke="#d8323c" stroke-width=".7"/></svg>
<div class="abs " style="left:591.8px;top:302.85px;width:133.6px;height:34.4px;background:linear-gradient(150deg,#c6f6d8,#a9efc4);border:1px solid #90e5b0;border-radius:5px;box-shadow:0 1px 2.500px rgba(120,80,140,.18)"></div>
<div class="abs ct" style="left:598.5px;top:309.35px;font-size:6.800px;line-height:8px;font-weight:bold;color:#1c1c28">Grocery List<span style="font-weight:normal;font-size:4.400px;color:#555565;margin-left:4.500px">10:05 AM</span></div>
<div class="abs ct" style="left:598.5px;top:318.805px;font-size:5.45px;line-height:7.09px;color:#454555">Milk, Eggs, Bread, Butter, Coffee,</div>
<div class="abs ct" style="left:598.5px;top:325.305px;font-size:5.45px;line-height:7.09px;color:#454555">Apples, Bananas, Chicken, Rice,</div>
<div class="abs " style="left:694.9px;top:315.55px;width:9px;height:9px;background:rgba(255,255,255,.62);border-radius:2.52px"></div>
<div class="abs " style="left:707.9px;top:315.55px;width:9px;height:9px;background:rgba(255,255,255,.62);border-radius:2.52px"></div>
<svg style="left:694.9px;top:315.55px" width="9" height="9" viewBox="0 0 9 9"><path d="M3 6 6 3" fill="none" stroke="#3e3e48" stroke-width="1.300" stroke-linecap="round"/><path d="M2.400 7.200h4.400" fill="none" stroke="#3e3e48" stroke-width=".7"/></svg>
<svg style="left:707.9px;top:315.55px" width="9" height="9" viewBox="0 0 9 9"><path d="M2.700 3.300h3.600v3.300a.6.600 0 0 1-.6.600H3.300a.6.600 0 0 1-.6-.6zM2.200 2.800h4.600M3.800 2.600v-.7h1.400v.7" fill="#f6b4b8" stroke="#d8323c" stroke-width=".7"/></svg>
<div class="abs " style="left:591.8px;top:341.3px;width:133.6px;height:34.4px;background:linear-gradient(150deg,#fdd6e8,#fbc2dc);border:1px solid #f6a6ca;border-radius:5px;box-shadow:0 1px 2.500px rgba(120,80,140,.18)"></div>
<div class="abs ct" style="left:598.5px;top:347.8px;font-size:6.800px;line-height:8px;font-weight:bold;color:#1c1c28">Book Ideas<span style="font-weight:normal;font-size:4.400px;color:#555565;margin-left:4.500px">Jan 19</span></div>
<div class="abs ct" style="left:598.5px;top:357.255px;font-size:5.45px;line-height:7.09px;color:#454555">Story about time travel and parallel</div>
<div class="abs ct" style="left:598.5px;top:363.755px;font-size:5.45px;line-height:7.09px;color:#454555">universes. Main character discovers</div>
<div class="abs " style="left:694.9px;top:354px;width:9px;height:9px;background:rgba(255,255,255,.62);border-radius:2.52px"></div>
<div class="abs " style="left:707.9px;top:354px;width:9px;height:9px;background:rgba(255,255,255,.62);border-radius:2.52px"></div>
<svg style="left:694.9px;top:354px" width="9" height="9" viewBox="0 0 9 9"><path d="M3 6 6 3" fill="none" stroke="#3e3e48" stroke-width="1.300" stroke-linecap="round"/><path d="M2.400 7.200h4.400" fill="none" stroke="#3e3e48" stroke-width=".7"/></svg>
<svg style="left:707.9px;top:354px" width="9" height="9" viewBox="0 0 9 9"><path d="M2.700 3.300h3.600v3.300a.6.600 0 0 1-.6.600H3.300a.6.600 0 0 1-.6-.6zM2.200 2.800h4.600M3.800 2.600v-.7h1.400v.7" fill="#f6b4b8" stroke="#d8323c" stroke-width=".7"/></svg>
<div class="abs " style="left:591.8px;top:379.75px;width:133.6px;height:34.4px;background:linear-gradient(150deg,#fde0bf,#fccc9b);border:1px solid #f8ba80;border-radius:5px;box-shadow:0 1px 2.500px rgba(120,80,140,.18)"></div>
<div class="abs ct" style="left:598.5px;top:386.25px;font-size:6.800px;line-height:8px;font-weight:bold;color:#1c1c28">Workout Routine<span style="font-weight:normal;font-size:4.400px;color:#555565;margin-left:4.500px">Jan 18</span></div>
<div class="abs ct" style="left:598.5px;top:395.705px;font-size:5.45px;line-height:7.09px;color:#454555">Monday: Chest &amp; Triceps</div>
<div class="abs ct" style="left:598.5px;top:402.205px;font-size:5.45px;line-height:7.09px;color:#454555">Wednesday: Back &amp; Biceps</div>
<div class="abs " style="left:694.9px;top:392.45px;width:9px;height:9px;background:rgba(255,255,255,.62);border-radius:2.52px"></div>
<div class="abs " style="left:707.9px;top:392.45px;width:9px;height:9px;background:rgba(255,255,255,.62);border-radius:2.52px"></div>
<svg style="left:694.9px;top:392.45px" width="9" height="9" viewBox="0 0 9 9"><path d="M3 6 6 3" fill="none" stroke="#3e3e48" stroke-width="1.300" stroke-linecap="round"/><path d="M2.400 7.200h4.400" fill="none" stroke="#3e3e48" stroke-width=".7"/></svg>
<svg style="left:707.9px;top:392.45px" width="9" height="9" viewBox="0 0 9 9"><path d="M2.700 3.300h3.600v3.300a.6.600 0 0 1-.6.600H3.300a.6.600 0 0 1-.6-.6zM2.200 2.800h4.600M3.800 2.600v-.7h1.400v.7" fill="#f6b4b8" stroke="#d8323c" stroke-width=".7"/></svg>
<div class="abs " style="left:591.8px;top:418.2px;width:133.6px;height:34.4px;background:linear-gradient(150deg,#cfe3fd,#b7d4fb);border:1px solid #9cc3f4;border-radius:5px;box-shadow:0 1px 2.500px rgba(120,80,140,.18)"></div>
<div class="abs ct" style="left:598.5px;top:424.7px;font-size:6.800px;line-height:8px;font-weight:bold;color:#1c1c28">Travel Plans<span style="font-weight:normal;font-size:4.400px;color:#555565;margin-left:4.500px">3:11 PM</span></div>
<div class="abs ct" style="left:598.5px;top:434.155px;font-size:5.45px;line-height:7.09px;color:#454555">Summer vacation to Japan:</div>
<div class="abs ct" style="left:598.5px;top:440.655px;font-size:5.45px;line-height:7.09px;color:#454555">- Tokyo (5 days)</div>
<div class="abs " style="left:694.9px;top:430.9px;width:9px;height:9px;background:rgba(255,255,255,.62);border-radius:2.52px"></div>
<div class="abs " style="left:707.9px;top:430.9px;width:9px;height:9px;background:rgba(255,255,255,.62);border-radius:2.52px"></div>
<svg style="left:694.9px;top:430.9px" width="9" height="9" viewBox="0 0 9 9"><path d="M3 6 6 3" fill="none" stroke="#3e3e48" stroke-width="1.300" stroke-linecap="round"/><path d="M2.400 7.200h4.400" fill="none" stroke="#3e3e48" stroke-width=".7"/></svg>
<svg style="left:707.9px;top:430.9px" width="9" height="9" viewBox="0 0 9 9"><path d="M2.700 3.300h3.600v3.300a.6.600 0 0 1-.6.600H3.300a.6.600 0 0 1-.6-.6zM2.200 2.800h4.600M3.800 2.600v-.7h1.400v.7" fill="#f6b4b8" stroke="#d8323c" stroke-width=".7"/></svg>
<div class="abs " style="left:697.2px;top:457.3px;width:25px;height:21.5px;background:linear-gradient(135deg,#a21de0 0%,#d022b0 55%,#ee2a8e 100%);border-radius:50%;box-shadow:0 2px 5px rgba(150,40,170,.4)"></div>
<svg style="left:705.7px;top:464.25px" width="8" height="7.5" viewBox="0 0 8 7.5"><path d="M4 .8v6.400M.8 4h6.400" stroke="#fff" stroke-width="1.100"/></svg>
<div class="abs " style="left:761.8px;top:212px;width:146px;height:273.3px;background:linear-gradient(150deg,#f8e9fd 0%,#f0dafc 40%,#ebd2fb 100%)"></div>
<div class="abs " style="left:761.8px;top:265px;width:145.7px;height:1px;background:#c9bccf"></div>
<svg style="left:769.5px;top:218.8px" width="5" height="7" viewBox="0 0 5 7"><path d="M3.800.8 1.200 3.500 3.800 6.200" fill="none" stroke="#3a3a48" stroke-width="1"/></svg>
<svg style="left:853.8px;top:218.8px" width="7" height="7" viewBox="0 0 7 7"><path d="M3.500.6a2.900 2.900 0 1 0 0 5.800c.7 0 .8-.5.600-.9-.3-.6.100-1.100.7-1.100h.8c.6 0 .9-.4.900-.9C6.500 1.800 5.200.6 3.500.6z" fill="none" stroke="#4a4a58" stroke-width=".8"/><circle cx="2.200" cy="2.600" r=".5" fill="#4a4a58"/><circle cx="3.700" cy="1.900" r=".5" fill="#4a4a58"/></svg>
<div class="abs " style="left:867.3px;top:215.8px;width:34.2px;height:12.7px;background:linear-gradient(90deg,#b81fe0 0%,#e0249c 70%,#f02a86 100%);border-radius:6.400px"></div>
<svg style="left:873.8px;top:219.9px" width="5" height="5" viewBox="0 0 5 5"><path d="M.8 2.700 2 3.900 4.300 1.300" fill="none" stroke="#fff" stroke-width=".8"/></svg>
<div class="abs ct" style="left:881.8px;top:219.23px;font-size:5.8px;line-height:7.54px;font-weight:bold;color:#fff">Save</div>
<div class="abs " style="left:767.7px;top:233px;width:133.5px;height:28px;background:rgba(255,246,255,.62);border-radius:5px"></div>
<div class="abs ct" style="left:772.3px;top:236.74px;font-size:4.4px;line-height:5.72px;color:#2e2e3a;font-weight:bold">Choose a color</div>
<div class="abs " style="left:772.2px;top:244.1px;width:15.2px;height:13.4px;background:linear-gradient(90deg,#ead9fb,#e4ccf8);border-radius:50%"></div>
<div class="abs " style="left:790px;top:244.1px;width:15.2px;height:13.4px;background:linear-gradient(90deg,#cfe3fd,#b9d5fb);border-radius:50%"></div>
<div class="abs " style="left:807.8px;top:244.1px;width:15.2px;height:13.4px;background:linear-gradient(90deg,#fdd6e8,#fbc6de);border-radius:50%"></div>
<div class="abs " style="left:825.6px;top:244.1px;width:15.2px;height:13.4px;background:linear-gradient(90deg,#c6f6d8,#adf0c6);border-radius:50%"></div>
<div class="abs " style="left:843.4px;top:244.1px;width:15.2px;height:13.4px;background:linear-gradient(90deg,#fdf2a4,#fbe980);border-radius:50%"></div>
<div class="abs " style="left:861.2px;top:244.1px;width:15.2px;height:13.4px;background:linear-gradient(90deg,#fde0bf,#fccf9f);border-radius:50%"></div>
<div class="abs ct" style="left:768px;top:270.8px;font-size:12px;line-height:15.6px;font-weight:bold;color:#4b5164;letter-spacing:.1px">Title</div>
<div class="abs ct" style="left:768px;top:293.595px;font-size:5.7px;line-height:7.41px;color:#8f8a9c">Start typing...</div>
<div class="abs" style="left:478.500px;top:350px;width:320px;height:16px;transform:rotate(-44.100deg);font-size:16px;line-height:16px;color:rgba(255,255,255,.45);text-shadow:0 0 .9px rgba(90,90,90,.38);white-space:nowrap;text-align:center;letter-spacing:.25px">Copyright © 2026 www.p30download.com</div>
<div class="abs " style="left:414.9px;top:210.9px;width:493.6px;height:275px;border:1px solid rgba(23,140,235,.85)"></div>
<div class="abs " style="left:412.8px;top:208.8px;width:5.5px;height:5.5px;background:#fff;border:1px solid #1791f2"></div>
<div class="abs " style="left:905.5px;top:208.8px;width:5.5px;height:5.5px;background:#fff;border:1px solid #1791f2"></div>
<div class="abs " style="left:412.8px;top:483px;width:5.5px;height:5.5px;background:#fff;border:1px solid #1791f2"></div>
<div class="abs " style="left:905.5px;top:483px;width:5.5px;height:5.5px;background:#fff;border:1px solid #1791f2"></div>
<div class="abs " style="left:637.7px;top:490.4px;width:49px;height:10.8px;background:#0d8ff0;border-radius:2px;font-size:8.200px;line-height:10.800px;text-align:center;color:#fff;font-weight:bold;letter-spacing:.1px">1328 × 848</div>
</div>
<div id="phone">
<div class="abs " style="left:31.6px;top:133px;width:2px;height:7px;background:#5a5a5a;border-radius:1px"></div>
<div class="abs " style="left:341.3px;top:202px;width:3.6px;height:43px;background:linear-gradient(90deg,#2c2c2c,#8a8a8a 45%,#5a5a5a 75%,#2a2a2a);border-radius:0 1.500px 1.500px 0"></div>
<div class="abs " style="left:341.3px;top:270px;width:3.6px;height:77px;background:linear-gradient(90deg,#2c2c2c,#8a8a8a 45%,#5a5a5a 75%,#2a2a2a);border-radius:0 1.500px 1.500px 0"></div>
<div class="abs " style="left:32px;top:51.5px;width:310px;height:574.5px;border-radius:47.500px/45.500px;background:#141414"></div>
<div class="abs " style="left:32.5px;top:51.8px;width:309px;height:573.7px;border-radius:47px/45px;background:linear-gradient(180deg,#dedede 0%,#c4c4c4 3%,#a8a8a8 12%,#a2a2a2 50%,#8c8c8c 94%,#808080 100%)"></div>
<div class="abs " style="left:35.3px;top:54.6px;width:303.2px;height:568.8px;border-radius:44.500px/42.600px;background:#020202;box-shadow:0 0 1.300px 0.500px #3a3a3a"></div>
<div class="abs " style="left:183px;top:51.4px;width:8px;height:1.8px;background:#8a8a8a;border-radius:1px"></div>
<div class="abs " style="left:43.2px;top:61px;width:287.3px;height:556.5px;border-radius:38px/35px;overflow:hidden;background:linear-gradient(168deg,#f8e8fd 0%,#f4defc 30%,#f1d7fd 65%,#efd2fd 100%)"><div class="abs" style="left:0;top:0;width:100%;height:100%;background:linear-gradient(115deg,rgba(255,255,255,0) 0%,rgba(255,255,255,.12) 45%,rgba(255,255,255,0) 60%)"></div></div>
<div class="abs ct" style="left:61px;top:70.385px;font-size:9.1px;line-height:11.83px;font-weight:bold;color:#3a3a46;letter-spacing:.1px">3:38</div>
<svg style="left:84.5px;top:71.5px" width="8" height="9" viewBox="0 0 8 9" ><path d="M4 .7 7.300 1.900v2.800C7.300 6.400 6 7.700 4 8.400 2 7.700.7 6.400.7 4.700V1.900z" fill="none" stroke="#2c2c38" stroke-width="1"/><path d="M1.500 2.200 6.300 7" stroke="#2c2c38" stroke-width=".9"/></svg>
<div class="abs " style="left:177px;top:70.5px;width:20px;height:17.5px;border-radius:50%;background:#050505"></div>
<div class="abs " style="left:185.5px;top:78px;width:3.5px;height:3px;border-radius:50%;background:#2a2350"></div>
<div class="abs " style="left:266.3px;top:77.2px;width:2px;height:2.4px;background:#15151c;border-radius:.5px"></div>
<div class="abs " style="left:269.1px;top:75.7px;width:2px;height:3.9px;background:#15151c;border-radius:.5px"></div>
<div class="abs " style="left:271.9px;top:74px;width:2px;height:5.6px;background:#15151c;border-radius:.5px"></div>
<div class="abs " style="left:274.7px;top:72.4px;width:2px;height:7.2px;background:#8d8796;border-radius:.5px"></div>
<svg style="left:281.55px;top:72px" width="10.5" height="8" viewBox="0 0 10.5 8" ><g fill="none" stroke="#15151c" stroke-width="1.500" stroke-linecap="round"><path d="M.9 2.900a5.900 5.900 0 0 1 8.200 0"/><path d="M2.800 4.900a3.200 3.200 0 0 1 4.400 0"/></g><circle cx="5" cy="6.800" r="1" fill="#15151c"/></svg>
<div class="abs " style="left:295.3px;top:72.1px;width:16.3px;height:7.8px;background:#08080c;border-radius:2.600px"></div>
<div class="abs " style="left:311.9px;top:74.5px;width:1.3px;height:3px;background:#3a3640;border-radius:0 1px 1px 0"></div>
<svg style="left:62.8px;top:100.5px" width="7" height="11" viewBox="0 0 7 11" ><path d="M5.800 1 1.400 5.500 5.800 10" fill="none" stroke="#3c3c4a" stroke-width="1.400" stroke-linecap="round" stroke-linejoin="round"/></svg>
<svg style="left:233.75px;top:100.85px" width="12.5" height="11.5" viewBox="0 0 12 13" preserveAspectRatio="none"><g fill="none" stroke="#4a4a5a" stroke-width="1.150" stroke-linejoin="round"><path d="M6 .7 7.300 1.100 7.700 2.600 9.200 2.200 10.500 3.300 9.900 4.700 11 5.800V7.200L9.900 8.300 10.500 9.700 9.200 10.800 7.700 10.400 7.300 11.900 6 12.300 4.700 11.900 4.300 10.400 2.800 10.800 1.500 9.700 2.100 8.300 1 7.200V5.800L2.100 4.700 1.500 3.300 2.800 2.200 4.300 2.600 4.700 1.100z"/><circle cx="6" cy="6.500" r="2.100"/></g></svg>
<div class="abs " style="left:258px;top:95px;width:62px;height:23px;border-radius:11.500px;background:linear-gradient(90deg,#c321e6 0%,#e01cb8 45%,#ff0f8a 100%)"></div>
<svg style="left:270px;top:101.8px" width="10" height="9" viewBox="0 0 10 9" ><ellipse cx="5" cy="4.500" rx="4.200" ry="3.800" fill="none" stroke="#fff" stroke-width="1.100"/><path d="M3.100 4.600 4.500 5.900 7 3.300" fill="none" stroke="#fff" stroke-width="1.100" stroke-linecap="round" stroke-linejoin="round"/></svg>
<div class="abs ct" style="left:286px;top:100.565px;font-size:9.9px;line-height:12.87px;font-weight:bold;color:#fff;letter-spacing:.1px">Save</div>
<div class="abs " style="left:54px;top:125px;width:266px;height:50px;border-radius:9px;background:rgba(255,250,255,.5)"></div>
<div class="abs ct" style="left:62px;top:131.625px;font-size:7.5px;line-height:9.75px;font-weight:bold;color:#36364a;letter-spacing:.05px">Choose a color</div>
<div class="abs " style="left:61.8px;top:145.5px;width:25.6px;height:22.3px;border-radius:50%;background:linear-gradient(90deg,#ecdcfb,#e6cdf9)"></div>
<div class="abs " style="left:92.8px;top:145.5px;width:25.6px;height:22.3px;border-radius:50%;background:linear-gradient(90deg,#b6f1cf,#a2eec2)"></div>
<div class="abs " style="left:123.6px;top:145.5px;width:25.6px;height:22.3px;border-radius:50%;background:linear-gradient(90deg,#fdd3e6,#fcc3dc)"></div>
<div class="abs " style="left:154.4px;top:145.5px;width:25.6px;height:22.3px;border-radius:50%;background:linear-gradient(90deg,#fde1c0,#fcc99a)"></div>
<div class="abs " style="left:185.2px;top:145.5px;width:25.6px;height:22.3px;border-radius:50%;background:linear-gradient(90deg,#d0e4fd,#b4d3fb)"></div>
<div class="abs " style="left:215.4px;top:144.7px;width:28px;height:24px;border-radius:50%;background:linear-gradient(90deg,#fdf0a0,#fbe873);border:1.300px solid #dba4e6;box-shadow:0 0 0 .5px rgba(210,160,225,.5)"></div>
<div class="abs ct" style="left:53.5px;top:192.975px;font-size:18.5px;line-height:24.05px;font-weight:bold;color:#505a6b;letter-spacing:.15px">Sports</div>
<div class="abs ct" style="left:54px;top:240.305px;font-size:10.3px;line-height:13.39px;color:#5c5c70;letter-spacing:.35px">a test note</div>
<div class="abs " style="left:106.3px;top:240px;width:1.3px;height:14px;background:#6a4a80"></div>
<div class="abs " style="left:48.5px;top:333.5px;width:36px;height:31px;border-radius:50%;background:#fdf6fe;box-shadow:3px 5px 12px rgba(110,60,150,.30),0 1px 2px rgba(120,70,150,.2)"></div>
<div class="abs " style="left:61px;top:346.3px;width:11px;height:1.2px;background:#22222c;border-radius:.5px"></div>
<div class="abs " style="left:61px;top:348.8px;width:11px;height:1.2px;background:#22222c;border-radius:.5px"></div>
<div class="abs " style="left:61px;top:351.3px;width:11px;height:1.2px;background:#22222c;border-radius:.5px"></div>
<div class="abs " style="left:152px;top:610.3px;width:69.5px;height:1.8px;background:#3a3340;border-radius:1px"></div>
<svg style="left:221px;top:196px" width="9" height="13" viewBox="0 0 9 13" ><path d="M.8.800V10.500L3.300 8.200 5 12l1.600-.7L5 7.600h3.200z" fill="#111" stroke="#fff" stroke-width=".7" stroke-linejoin="round"/></svg>
</div>
<div id="emubar">
<div class="abs" style="left:347px;top:51px;width:44.5px;height:331.5px;background:#efedf1"></div>
<svg style="left:357.3px;top:58px" width="6" height="6" viewBox="0 0 6 6" preserveAspectRatio="none"><path d="M.8.800 5.200 5.200M5.200.800.8 5.200" fill="none" stroke="#5d7a8c" stroke-width="1.200" stroke-linecap="round" stroke-linejoin="round" stroke-width="1"/></svg>
<svg style="left:375.5px;top:60px" width="6" height="2" viewBox="0 0 6 2" preserveAspectRatio="none"><path d="M.5 1h5" fill="none" stroke="#5d7a8c" stroke-width="1.200" stroke-linecap="round" stroke-linejoin="round" stroke-width="1"/></svg>
<svg style="left:361.25px;top:74.25px" width="15.5" height="14.5" viewBox="0 0 14 13" preserveAspectRatio="none"><path fill="none" stroke="#5d7a8c" stroke-width="1.200" stroke-linecap="round" stroke-linejoin="round" d="M4.300 2.600a5.300 5 0 1 0 5.400 0"/><path fill="none" stroke="#5d7a8c" stroke-width="1.200" stroke-linecap="round" stroke-linejoin="round" d="M7 .8v5.400"/></svg>
<svg style="left:361px;top:104.5px" width="16" height="11" viewBox="0 0 16 11" preserveAspectRatio="none"><path fill="none" stroke="#5d7a8c" stroke-width="1.200" stroke-linecap="round" stroke-linejoin="round" d="M1 3.800h2.800L7.800.9v9.200L3.800 7.200H1z"/><path fill="none" stroke="#5d7a8c" stroke-width="1.200" stroke-linecap="round" stroke-linejoin="round" d="M10 3.300a3 3 0 0 1 0 4.400"/><path fill="none" stroke="#5d7a8c" stroke-width="1.200" stroke-linecap="round" stroke-linejoin="round" d="M12 1.500a5.500 5.500 0 0 1 0 8"/></svg>
<svg style="left:361.5px;top:133px" width="12" height="11" viewBox="0 0 12 11" preserveAspectRatio="none"><path fill="none" stroke="#5d7a8c" stroke-width="1.200" stroke-linecap="round" stroke-linejoin="round" d="M1 3.800h2.800L7.800.9v9.200L3.800 7.200H1z"/><path fill="none" stroke="#5d7a8c" stroke-width="1.200" stroke-linecap="round" stroke-linejoin="round" d="M10 3.300a3 3 0 0 1 0 4.400"/></svg>
<svg style="left:361px;top:161px" width="16" height="12" viewBox="0 0 16 12" preserveAspectRatio="none"><path fill="none" stroke="#5d7a8c" stroke-width="1.200" stroke-linecap="round" stroke-linejoin="round" d="M1 3.200a1 1 0 0 1 1-1h2.300L5.500.8h5l1.200 1.400H14a1 1 0 0 1 1 1v7a1 1 0 0 1-1 1H2a1 1 0 0 1-1-1z"/><ellipse fill="none" stroke="#5d7a8c" stroke-width="1.200" stroke-linecap="round" stroke-linejoin="round" cx="8" cy="6.500" rx="2.600" ry="2.300"/></svg>
<svg style="left:361.5px;top:188px" width="15" height="14" viewBox="0 0 15 14" preserveAspectRatio="none"><ellipse fill="none" stroke="#5d7a8c" stroke-width="1.200" stroke-linecap="round" stroke-linejoin="round" cx="6" cy="5.500" rx="5" ry="4.600"/><path fill="none" stroke="#5d7a8c" stroke-width="1.200" stroke-linecap="round" stroke-linejoin="round" d="M9.800 9 14 13"/><path fill="none" stroke="#5d7a8c" stroke-width="1.200" stroke-linecap="round" stroke-linejoin="round" d="M6 3.300v4.400M3.600 5.500h4.800"/></svg>
<svg style="left:361px;top:217.8px" width="16" height="12" viewBox="0 0 16 12" preserveAspectRatio="none"><rect fill="none" stroke="#5d7a8c" stroke-width="1.200" stroke-linecap="round" stroke-linejoin="round" x=".8" y=".8" width="8.400" height="10.400" rx="1"/><path fill="none" stroke="#5d7a8c" stroke-width="1.200" stroke-linecap="round" stroke-linejoin="round" d="M3.300 2.800h3.400"/><path fill="none" stroke="#5d7a8c" stroke-width="1.200" stroke-linecap="round" stroke-linejoin="round" d="M10.500 1.600Q15.300 2.600 14.300 7 13.500 10.300 10.800 11"/><path fill="none" stroke="#5d7a8c" stroke-width="1.200" stroke-linecap="round" stroke-linejoin="round" d="M13.200 1 10.500 1.600 11.800 3.900"/></svg>
<svg style="left:361px;top:246.2px" width="16" height="12" viewBox="0 0 16 12" preserveAspectRatio="none"><rect fill="none" stroke="#5d7a8c" stroke-width="1.200" stroke-linecap="round" stroke-linejoin="round" x="6.800" y=".8" width="8.400" height="10.400" rx="1"/><path fill="none" stroke="#5d7a8c" stroke-width="1.200" stroke-linecap="round" stroke-linejoin="round" d="M9.300 2.800h3.400"/><path fill="none" stroke="#5d7a8c" stroke-width="1.200" stroke-linecap="round" stroke-linejoin="round" d="M5.500 1.600Q.7 2.600 1.700 7 2.500 10.300 5.200 11"/><path fill="none" stroke="#5d7a8c" stroke-width="1.200" stroke-linecap="round" stroke-linejoin="round" d="M2.800 1 5.500 1.600 4.200 3.900"/></svg>
<svg style="left:363px;top:275.5px" width="10" height="10" viewBox="0 0 10 10" preserveAspectRatio="none"><path fill="none" stroke="#5d7a8c" stroke-width="1.200" stroke-linecap="round" stroke-linejoin="round" d="M8.500 1v8L1.200 5z"/></svg>
<svg style="left:362.5px;top:303.3px" width="13" height="11" viewBox="0 0 13 11" preserveAspectRatio="none"><ellipse fill="none" stroke="#5d7a8c" stroke-width="1.200" stroke-linecap="round" stroke-linejoin="round" cx="6.500" cy="5.500" rx="5.600" ry="4.600"/></svg>
<svg style="left:364px;top:332.5px" width="10" height="9" viewBox="0 0 10 9" preserveAspectRatio="none"><rect fill="none" stroke="#5d7a8c" stroke-width="1.200" stroke-linecap="round" stroke-linejoin="round" x=".8" y=".8" width="8.400" height="7.400" rx=".5"/></svg>
<svg style="left:362.8px;top:364px" width="13" height="3" viewBox="0 0 13 3" preserveAspectRatio="none"><circle cx="1.500" cy="1.500" r="1.350" fill="#5d7a8c"/><circle cx="6.500" cy="1.500" r="1.350" fill="#5d7a8c"/><circle cx="11.500" cy="1.500" r="1.350" fill="#5d7a8c"/></svg>
</div>
<div id="toolbar">
<div class="abs" style="left:461.5px;top:634.5px;width:357px;height:31.5px;background:#2c2c2c;border-radius:9px;box-shadow:0 2px 6px rgba(0,0,0,.35),0 0 0 .5px #383838"></div>
<div class="abs" style="left:467px;top:640px;width:24.5px;height:21px;background:#0d8ff0;border-radius:4.500px"></div>
<svg style="left:474px;top:645px" width="11" height="11" viewBox="0 0 11 11"><path d="M1.300 1.300 9.800 4.300 6.200 6 4.500 9.800z" fill="none" stroke="#fff" stroke-width="1.150" stroke-linejoin="round"/></svg>
<svg style="left:495px;top:649px" width="6" height="4" viewBox="0 0 6 4"><path d="M.8.800 3 3 5.200.800" fill="none" stroke="#d0d0d0" stroke-width="1"/></svg>
<svg style="left:515.5px;top:645px" width="12" height="11" viewBox="0 0 12 11"><path fill="none" stroke="#e6e6e6" stroke-width="1.150" stroke-linejoin="round" stroke-linecap="round" d="M3.500.8v9.400M8.500.8v9.400M.8 3.300h10.400M.8 7.700h10.400"/></svg>
<svg style="left:537px;top:649px" width="6" height="4" viewBox="0 0 6 4"><path d="M.8.800 3 3 5.200.800" fill="none" stroke="#d0d0d0" stroke-width="1"/></svg>
<svg style="left:557px;top:645px" width="13" height="11" viewBox="0 0 13 11"><rect fill="none" stroke="#e6e6e6" stroke-width="1.150" stroke-linejoin="round" stroke-linecap="round" x=".8" y=".8" width="11.400" height="9.400" rx="1.500"/></svg>
<svg style="left:579.5px;top:649px" width="6" height="4" viewBox="0 0 6 4"><path d="M.8.800 3 3 5.200.800" fill="none" stroke="#d0d0d0" stroke-width="1"/></svg>
<svg style="left:599px;top:644.5px" width="14" height="12" viewBox="0 0 14 12"><path fill="none" stroke="#e6e6e6" stroke-width="1.150" stroke-linejoin="round" stroke-linecap="round" d="M1 1.500 10.500 3.300c2.300.9 3 4 .8 5.600L7.300 11c-1 .5-2 0-2.500-1z"/><ellipse fill="none" stroke="#e6e6e6" stroke-width="1.150" stroke-linejoin="round" stroke-linecap="round" cx="7.300" cy="6.300" rx="1.700" ry="1.500"/><path fill="none" stroke="#e6e6e6" stroke-width="1.150" stroke-linejoin="round" stroke-linecap="round" d="M1 1.500 6 5.300"/></svg>
<svg style="left:621.5px;top:649px" width="6" height="4" viewBox="0 0 6 4"><path d="M.8.800 3 3 5.200.800" fill="none" stroke="#d0d0d0" stroke-width="1"/></svg>
<svg style="left:642px;top:645px" width="12" height="11" viewBox="0 0 12 11"><path fill="none" stroke="#e6e6e6" stroke-width="1.150" stroke-linejoin="round" stroke-linecap="round" stroke-linecap="butt" d="M.8 2.800V.9h10.400v1.900M6 .9v9.300M4.200 10.200h3.600"/></svg>
<svg style="left:671px;top:645px" width="13" height="11" viewBox="0 0 13 11"><path fill="none" stroke="#e6e6e6" stroke-width="1.150" stroke-linejoin="round" stroke-linecap="round" d="M6.500.8a5.500 4.600 0 0 1 0 9.200H1.200V5.400A5.400 4.600 0 0 1 6.500.8z"/></svg>
<svg style="left:693.5px;top:649px" width="6" height="4" viewBox="0 0 6 4"><path d="M.8.800 3 3 5.200.800" fill="none" stroke="#d0d0d0" stroke-width="1"/></svg>
<svg style="left:713.5px;top:645px" width="13" height="11" viewBox="0 0 13 11"><ellipse fill="none" stroke="#e6e6e6" stroke-width="1.150" stroke-linejoin="round" stroke-linecap="round" cx="2.800" cy="2.600" rx="1.900" ry="1.700"/><ellipse fill="none" stroke="#e6e6e6" stroke-width="1.150" stroke-linejoin="round" stroke-linecap="round" cx="8.300" cy="2.600" rx="1.900" ry="1.700"/><rect fill="none" stroke="#e6e6e6" stroke-width="1.150" stroke-linejoin="round" stroke-linecap="round" x=".9" y="6.300" width="3.800" height="3.500" rx=".7"/><path fill="none" stroke="#e6e6e6" stroke-width="1.150" stroke-linejoin="round" stroke-linecap="round" d="M8.300 6v4M6.200 8h4.200M11.600 4.800v0"/></svg>
<div class="abs" style="left:738px;top:635px;width:1px;height:31px;background:#3a3a3a"></div>
<div class="abs" style="left:744px;top:640px;width:68.5px;height:21px;background:#383838;border-radius:5px"></div>
<div class="abs" style="left:767.5px;top:641px;width:21px;height:19px;background:#262626;border-radius:4px"></div>
<svg style="left:750.5px;top:646px" width="11" height="9" viewBox="0 0 11 9"><path d="M1 5.500C3 3 5 1.500 6.500 1.200 7.500 1 7.800 2 7 3L4 6.500c-.6.800 0 1.500 1 1L10 4.500" fill="none" stroke="#b4b4b4" stroke-width="1.100" stroke-linecap="round"/></svg>
<svg style="left:772.5px;top:646px" width="11" height="9" viewBox="0 0 11 9"><path d="M.8.800h9.400v2.200H.8zM.8.800v7.400M3.600 3v5.200M.8 8.200h2.800" fill="none" stroke="#5aa5ee" stroke-width="1.050"/><path d="M5.800 5.200h4.200L7.900 8.300z" fill="none" stroke="#5aa5ee" stroke-width="1.050" stroke-linejoin="round"/></svg>
<svg style="left:795px;top:646.5px" width="11" height="8" viewBox="0 0 11 8"><path d="M3.200 1.200.8 4l2.400 2.800M7.800 1.200 10.200 4 7.800 6.800M6.300.5 4.700 7.500" fill="none" stroke="#b4b4b4" stroke-width="1"/></svg>
</div>
<div id="dock">
<svg width="0" height="0" style="position:absolute"><defs><clipPath id="rsq"><rect width="50" height="45" rx="11.500" ry="10.300"/></clipPath><linearGradient id="dg1" x1="0" y1="0" x2="0" y2="1"><stop offset="0" stop-color="#2aa9ff"/><stop offset="1" stop-color="#0b5fe6"/></linearGradient><linearGradient id="dg2" x1="0" y1="0" x2="0" y2="1"><stop offset="0" stop-color="#eef7ff"/><stop offset="1" stop-color="#a4cdf6"/></linearGradient><linearGradient id="dg3" x1="0" y1="0" x2="0" y2="1"><stop offset="0" stop-color="#f8f8fa"/><stop offset="1" stop-color="#e2e2e8"/></linearGradient><linearGradient id="dg4" x1="0" y1="0" x2="0" y2="1"><stop offset="0" stop-color="#fdfdfd"/><stop offset="1" stop-color="#e6e6ea"/></linearGradient><linearGradient id="dg5" x1="0" y1="0" x2="0" y2="1"><stop offset="0" stop-color="#37b8ff"/><stop offset="1" stop-color="#1a5be0"/></linearGradient><linearGradient id="dg6" x1="0" y1="0" x2="0" y2="1"><stop offset="0" stop-color="#62f47c"/><stop offset="1" stop-color="#10b92f"/></linearGradient><linearGradient id="dg7" x1="0" y1="0" x2="0" y2="1"><stop offset="0" stop-color="#45b6ff"/><stop offset="1" stop-color="#1560ee"/></linearGradient><linearGradient id="dg8" x1="0" y1="0" x2="0" y2="1"><stop offset="0" stop-color="#ffffff"/><stop offset="1" stop-color="#eeeeee"/></linearGradient><linearGradient id="dg9" x1="0" y1="0" x2="0" y2="1"><stop offset="0" stop-color="#ffffff"/><stop offset="1" stop-color="#f0f0f2"/></linearGradient><linearGradient id="dg10" x1="0" y1="0" x2="0" y2="1"><stop offset="0" stop-color="#d2cbbd"/><stop offset="1" stop-color="#b6ae9f"/></linearGradient><linearGradient id="dg11" x1="0" y1="0" x2="0" y2="1"><stop offset="0" stop-color="#ffffff"/><stop offset="1" stop-color="#f2f2f4"/></linearGradient><linearGradient id="dg12" x1="0" y1="0" x2="0" y2="1"><stop offset="0" stop-color="#ffd84a"/><stop offset="1" stop-color="#ffc400"/></linearGradient><linearGradient id="dg13" x1="0" y1="0" x2="0" y2="1"><stop offset="0" stop-color="#262626"/><stop offset="1" stop-color="#050505"/></linearGradient><linearGradient id="dg14" x1="0" y1="0" x2="0" y2="1"><stop offset="0" stop-color="#ff5f74"/><stop offset="1" stop-color="#f2123a"/></linearGradient><linearGradient id="dg15" x1="0" y1="0" x2="0" y2="1"><stop offset="0" stop-color="#ff6250"/><stop offset="1" stop-color="#e4281e"/></linearGradient><linearGradient id="dg16" x1="0" y1="0" x2="0" y2="1"><stop offset="0" stop-color="#30c4ff"/><stop offset="1" stop-color="#1463ec"/></linearGradient><linearGradient id="dg17" x1="0" y1="0" x2="0.6" y2="1"><stop offset="0" stop-color="#8f7cf2"/><stop offset="1" stop-color="#5baaf6"/></linearGradient><linearGradient id="dg18" x1="0" y1="0" x2="0" y2="1"><stop offset="0" stop-color="#a0a0a5"/><stop offset="1" stop-color="#68686d"/></linearGradient><linearGradient id="dg19" x1="0" y1="0" x2="0" y2="1"><stop offset="0" stop-color="#221f1c"/><stop offset="1" stop-color="#0a0908"/></linearGradient><linearGradient id="dg20" x1="0" y1="0" x2="0" y2="1"><stop offset="0" stop-color="#31b2ff"/><stop offset="1" stop-color="#1467ea"/></linearGradient><linearGradient id="dg21" x1="0" y1="0" x2="0" y2="1"><stop offset="0" stop-color="#252525"/><stop offset="1" stop-color="#0e0e0e"/></linearGradient><linearGradient id="dg22" x1="0" y1="0" x2="0" y2="1"><stop offset="0" stop-color="#ffffff"/><stop offset="1" stop-color="#f0f0f0"/></linearGradient><linearGradient id="dg23" x1="0" y1="0" x2="0" y2="1"><stop offset="0" stop-color="#2a9cff"/><stop offset="1" stop-color="#0a58e0"/></linearGradient><linearGradient id="dg24" x1="0" y1="0" x2="0" y2="1"><stop offset="0" stop-color="#ffffff"/><stop offset="1" stop-color="#ececee"/></linearGradient><linearGradient id="dg25" x1="0" y1="0" x2="0" y2="1"><stop offset="0" stop-color="#2a2a2c"/><stop offset="1" stop-color="#050505"/></linearGradient></defs></svg>
<div class="abs" style="left:25px;top:676px;width:1230px;height:39.5px;border-radius:11px;background:radial-gradient(ellipse 120px 14px at 600px 24px,rgba(140,175,160,.35),rgba(140,175,160,0)),radial-gradient(ellipse 160px 12px at 470px 10px,rgba(60,100,110,.35),rgba(60,100,110,0)),radial-gradient(ellipse 140px 12px at 760px 14px,rgba(60,100,105,.3),rgba(60,100,105,0)),linear-gradient(90deg,rgba(110,162,154,.94) 0%,rgba(104,154,148,.94) 22%,rgba(96,140,138,.94) 38%,rgba(94,136,134,.94) 55%,rgba(104,138,126,.94) 72%,rgba(112,142,120,.94) 85%,rgba(112,142,116,.94) 100%);box-shadow:0 0 0 .6px rgba(190,215,205,.55), inset 0 .6px 0 rgba(220,240,230,.35)"></div>
<svg style="left:35.5px;top:685px;filter:drop-shadow(0 .6px .8px rgba(0,0,0,.28))" width="25" height="22.6" viewBox="0 0 50 45" preserveAspectRatio="none"><g clip-path="url(#rsq)"><rect width="50" height="45" fill="url(#dg1)"/><path d="M28 0H50V45H30.500C28.500 39 27.500 33 27.300 27.500H21C21 16 24 6.500 28 0z" fill="url(#dg2)"/><path d="M16 11.500v5M34 11.500v5" stroke="#0b3466" stroke-width="2.200" stroke-linecap="round"/><path d="M9.500 28.500Q25 40.500 41 28.500" fill="none" stroke="#0b3466" stroke-width="2.100" stroke-linecap="round"/></g></svg>
<div class="abs" style="left:46.9px;top:711.6px;width:2.2px;height:2px;background:#0c0c0c;border-radius:50%"></div>
<svg style="left:70.5px;top:685px;filter:drop-shadow(0 .6px .8px rgba(0,0,0,.28))" width="25" height="22.6" viewBox="0 0 50 45" preserveAspectRatio="none"><g clip-path="url(#rsq)"><rect width="50" height="45" fill="url(#dg3)"/><rect x="10" y="9" width="30" height="6.500" rx="3.200" fill="#909096"/><rect x="10" y="19.5" width="8.500" height="7" rx="2" fill="#ff9f0a"/><rect x="21" y="19.5" width="8.500" height="7" rx="2" fill="#ff2d92"/><rect x="32" y="19.5" width="8.500" height="7" rx="2" fill="#1fd1a3"/><rect x="10" y="29.0" width="8.500" height="7" rx="2" fill="#da8cff"/><rect x="21" y="29.0" width="8.500" height="7" rx="2" fill="#3fb4ff"/><rect x="32" y="29.0" width="8.500" height="7" rx="2" fill="#9c9ca2"/></g></svg>
<svg style="left:105.1px;top:685px;filter:drop-shadow(0 .6px .8px rgba(0,0,0,.28))" width="25" height="22.6" viewBox="0 0 50 45" preserveAspectRatio="none"><g clip-path="url(#rsq)"><rect width="50" height="45" fill="url(#dg4)"/><ellipse cx="25" cy="22.500" rx="17.800" ry="16" fill="url(#dg5)"/><path d="M37 11 27.300 24.600 22.700 20.400z" fill="#ff3b30"/><path d="M13 34 27.300 24.600 22.700 20.400z" fill="#fff"/></g></svg>
<div class="abs" style="left:116.5px;top:711.6px;width:2.2px;height:2px;background:#0c0c0c;border-radius:50%"></div>
<svg style="left:140.3px;top:685px;filter:drop-shadow(0 .6px .8px rgba(0,0,0,.28))" width="25" height="22.6" viewBox="0 0 50 45" preserveAspectRatio="none"><g clip-path="url(#rsq)"><rect width="50" height="45" fill="url(#dg6)"/><ellipse cx="25.500" cy="21" rx="14.500" ry="11.200" fill="#fff" opacity=".96"/><path d="M14.500 28Q14 33 9.500 34.500 16 35.500 20 31z" fill="#fff" opacity=".96"/></g></svg>
<svg style="left:175.3px;top:685px;filter:drop-shadow(0 .6px .8px rgba(0,0,0,.28))" width="25" height="22.6" viewBox="0 0 50 45" preserveAspectRatio="none"><g clip-path="url(#rsq)"><rect width="50" height="45" fill="url(#dg7)"/><rect x="8.500" y="12" width="33" height="21.500" rx="3.200" fill="#fff" opacity=".97"/><path d="M9.500 13.500 25 25.500 40.500 13.500M9.500 32.500 20 22.500M40.500 32.500 30 22.500" fill="none" stroke="#9ccaf6" stroke-width="1.500"/></g></svg>
<svg style="left:210.2px;top:685px;filter:drop-shadow(0 .6px .8px rgba(0,0,0,.28))" width="25" height="22.6" viewBox="0 0 50 45" preserveAspectRatio="none"><g clip-path="url(#rsq)"><rect width="50" height="45" fill="#f2f1ea"/><circle cx="43" cy="7" r="19" fill="#58d279"/><circle cx="43" cy="7" r="11" fill="#86e29c"/><rect x="17.500" y="0" width="9" height="20" fill="#2a7cf6"/><path d="M0 25Q9 30 11 45H0z" fill="#ff8ebb"/><path d="M33 45 41 36 50 40V45z" fill="#ffc41a"/><ellipse cx="22" cy="26.500" rx="13" ry="12" fill="none" stroke="#fff" stroke-width="5"/><ellipse cx="22" cy="26.500" rx="9" ry="8.300" fill="#2a7cf6"/><path d="M22 20.500 27 31.500 22 29 17 31.500z" fill="#fff"/></g></svg>
<svg style="left:245.1px;top:685px;filter:drop-shadow(0 .6px .8px rgba(0,0,0,.28))" width="25" height="22.6" viewBox="0 0 50 45" preserveAspectRatio="none"><g clip-path="url(#rsq)"><rect width="50" height="45" fill="url(#dg8)"/><g transform="translate(25 22.500) scale(1 .9)"><ellipse cx="0" cy="-9.500" rx="4.700" ry="8" fill="#ff9500" opacity=".85" transform="rotate(0)"/><ellipse cx="0" cy="-9.500" rx="4.700" ry="8" fill="#ffcc00" opacity=".85" transform="rotate(45)"/><ellipse cx="0" cy="-9.500" rx="4.700" ry="8" fill="#8bd650" opacity=".85" transform="rotate(90)"/><ellipse cx="0" cy="-9.500" rx="4.700" ry="8" fill="#2fc7a3" opacity=".85" transform="rotate(135)"/><ellipse cx="0" cy="-9.500" rx="4.700" ry="8" fill="#3aa0f5" opacity=".85" transform="rotate(180)"/><ellipse cx="0" cy="-9.500" rx="4.700" ry="8" fill="#7d6cf0" opacity=".85" transform="rotate(225)"/><ellipse cx="0" cy="-9.500" rx="4.700" ry="8" fill="#d65ae0" opacity=".85" transform="rotate(270)"/><ellipse cx="0" cy="-9.500" rx="4.700" ry="8" fill="#ff4a5a" opacity=".85" transform="rotate(315)"/></g></g></svg>
<svg style="left:279.5px;top:685px;filter:drop-shadow(0 .6px .8px rgba(0,0,0,.28))" width="25" height="22.6" viewBox="0 0 50 45" preserveAspectRatio="none"><g clip-path="url(#rsq)"><rect width="50" height="45" fill="url(#dg6)"/><rect x="9" y="14" width="22.500" height="17" rx="4.200" fill="#eafcec"/><path d="M33.500 20.500 41.500 15.500V29.500L33.500 24.500z" fill="#eafcec"/></g></svg>
<svg style="left:314.5px;top:685px;filter:drop-shadow(0 .6px .8px rgba(0,0,0,.28))" width="25" height="22.6" viewBox="0 0 50 45" preserveAspectRatio="none"><g clip-path="url(#rsq)"><rect width="50" height="45" fill="url(#dg6)"/><path d="M15.500 10.500c-2 1.200-3.500 3.500-3 6.500 1 6 6.500 13.500 13.500 17.500 3 1.500 5.800 1 7.300-.6l1.600-2c.6-1 .3-2.200-.8-2.800l-4.500-2.400c-1-.5-2.100-.2-2.700.6l-1.300 1.600c-3.600-1.800-6.600-5-8-8.500l1.700-1.300c.8-.6 1.100-1.700.6-2.700l-2-4.500c-.5-1-1.500-1.500-2.400-1.400z" fill="#fff"/></g></svg>
<svg style="left:349.9px;top:685px;filter:drop-shadow(0 .6px .8px rgba(0,0,0,.28))" width="25" height="22.6" viewBox="0 0 50 45" preserveAspectRatio="none"><g clip-path="url(#rsq)"><rect width="50" height="45" fill="url(#dg9)"/><text x="25" y="12.500" font-family="Liberation Sans" font-weight="bold" font-size="8.500" fill="#ff3b30" text-anchor="middle">Wed</text><text x="25" y="37.500" font-family="Liberation Sans" font-size="25" fill="#1c1c1e" text-anchor="middle" letter-spacing="-1">21</text></g></svg>
<svg style="left:384.5px;top:685px;filter:drop-shadow(0 .6px .8px rgba(0,0,0,.28))" width="25" height="22.6" viewBox="0 0 50 45" preserveAspectRatio="none"><g clip-path="url(#rsq)"><rect width="50" height="45" fill="url(#dg10)"/><rect x="43.500" y="3" width="6.500" height="10" fill="#3fb4f5"/><rect x="43.500" y="13" width="6.500" height="10" fill="#ff9f0a"/><rect x="43.500" y="23" width="6.500" height="10" fill="#7ed957"/><rect x="43.500" y="33" width="6.500" height="9" fill="#b6ae9f"/><ellipse cx="22.500" cy="22.500" rx="15" ry="14" fill="#9b9489"/><ellipse cx="22.500" cy="17.500" rx="6" ry="5.500" fill="#f3f0ea"/><path d="M10.500 31.500Q13 25.500 22.500 25.500T34.500 31.500Q29.500 36.500 22.500 36.500T10.500 31.500z" fill="#f3f0ea"/></g></svg>
<svg style="left:419.5px;top:685px;filter:drop-shadow(0 .6px .8px rgba(0,0,0,.28))" width="25" height="22.6" viewBox="0 0 50 45" preserveAspectRatio="none"><g clip-path="url(#rsq)"><rect width="50" height="45" fill="url(#dg11)"/><circle cx="11.500" cy="12" r="2.800" fill="#2f7bf6"/><circle cx="11.500" cy="22.500" r="2.800" fill="#ff3b30"/><circle cx="11.500" cy="33" r="2.800" fill="#ff9500"/><path d="M18.500 12H43M18.500 22.500H43M18.500 33H43" stroke="#dcdce0" stroke-width="1.600"/></g></svg>
<svg style="left:454.5px;top:685px;filter:drop-shadow(0 .6px .8px rgba(0,0,0,.28))" width="25" height="22.6" viewBox="0 0 50 45" preserveAspectRatio="none"><g clip-path="url(#rsq)"><rect width="50" height="45" fill="#fbfbf9"/><rect width="50" height="12.500" fill="url(#dg12)"/><path d="M0 12.500H50" stroke="#e2c040" stroke-width=".8"/><path d="M5 22.500H45M5 32H45" stroke="#d9d9d6" stroke-width="1.400"/></g></svg>
<div class="abs" style="left:465.9px;top:711.6px;width:2.2px;height:2px;background:#0c0c0c;border-radius:50%"></div>
<svg style="left:489.5px;top:685px;filter:drop-shadow(0 .6px .8px rgba(0,0,0,.28))" width="25" height="22.6" viewBox="0 0 50 45" preserveAspectRatio="none"><g clip-path="url(#rsq)"><rect width="50" height="45" fill="url(#dg13)"/><path d="M16.800 25.600c0-2.300 1.900-3.400 2-3.500-1.100-1.600-2.800-1.800-3.400-1.800-1.400-.2-2.800.8-3.500.8s-1.900-.8-3.100-.8c-1.600 0-3.100.9-3.900 2.400-1.700 2.900-.4 7.200 1.200 9.500.8 1.200 1.700 2.400 3 2.400 1.200-.1 1.700-.8 3.100-.8s1.900.8 3.100.7c1.300 0 2.100-1.100 2.900-2.300.9-1.300 1.300-2.600 1.300-2.700-.1 0-2.700-1-2.700-3.900zM14.600 18.800c.6-.8 1.100-1.900 1-3-1 0-2.100.6-2.800 1.400-.6.700-1.200 1.800-1 2.900 1 .1 2.100-.5 2.800-1.300z" fill="#fff" transform="translate(1.500 -3.500)"/><text x="22.500" y="30.500" font-family="Liberation Sans" font-weight="bold" font-size="17.500" fill="#fff" letter-spacing="-.3">tv</text></g></svg>
<svg style="left:524.1px;top:685px;filter:drop-shadow(0 .6px .8px rgba(0,0,0,.28))" width="25" height="22.6" viewBox="0 0 50 45" preserveAspectRatio="none"><g clip-path="url(#rsq)"><rect width="50" height="45" fill="url(#dg14)"/><g transform="translate(25 22.0) scale(1.13) translate(-25 -22.500)"><ellipse cx="16.500" cy="32" rx="4.800" ry="3.600" fill="#fff"/><ellipse cx="32.500" cy="29" rx="4.800" ry="3.600" fill="#fff"/><path d="M19.300 32V13.500L37.300 9.500V29H35V15L21.300 18V32z" fill="#fff"/><path d="M19.300 13.500 37.300 9.500V14.500L19.300 18.500z" fill="#fff"/></g></g></svg>
<svg style="left:559px;top:685px;filter:drop-shadow(0 .6px .8px rgba(0,0,0,.28))" width="25" height="22.6" viewBox="0 0 50 45" preserveAspectRatio="none"><g clip-path="url(#rsq)"><rect width="50" height="45" fill="url(#dg15)"/><g transform="translate(27 21.5) scale(1.32) translate(-25 -22.500)"><g transform="rotate(45 25 22.500)"><path d="M25 4C31 9 32.500 18 31 27H19C17.500 18 19 9 25 4z" fill="#fff"/><path d="M19 22 13.500 29.500 19.500 28zM31 22 36.500 29.500 30.500 28z" fill="#ffe3df"/><circle cx="25" cy="15" r="2.800" fill="#f2564a"/><path d="M22 29.500h6L25 38z" fill="#ffd9d4"/><circle cx="22" cy="36" r="2.400" fill="#ffc9c2" opacity=".85"/><circle cx="28" cy="37.500" r="2" fill="#ffc9c2" opacity=".75"/></g></g></g></svg>
<svg style="left:593.9px;top:685px;filter:drop-shadow(0 .6px .8px rgba(0,0,0,.28))" width="25" height="22.6" viewBox="0 0 50 45" preserveAspectRatio="none"><g clip-path="url(#rsq)"><rect width="50" height="45" fill="url(#dg16)"/><g transform="translate(25 22.5) scale(1.2) translate(-25 -22.500)"><path d="M16.500 33.500 27.500 12M22.500 12 34.500 33.500M11 28.500H39" fill="none" stroke="#fff" stroke-width="3.400" stroke-linecap="round"/></g></g></svg>
<svg style="left:628.8px;top:685px;filter:drop-shadow(0 .6px .8px rgba(0,0,0,.28))" width="25" height="22.6" viewBox="0 0 50 45" preserveAspectRatio="none"><g clip-path="url(#rsq)"><rect width="50" height="45" fill="url(#dg17)"/><g transform="translate(24.5 22.5) scale(1.18) translate(-25 -22.500)"><rect x="13.500" y="8.500" width="13" height="25" rx="3.200" fill="#1b1b3e"/><rect x="21.500" y="14" width="18" height="22.500" rx="3" fill="#ebe9fa"/><path d="M25 20.500H36M25 25H36M25 29.500H33" stroke="#b9b4e0" stroke-width="1.500"/></g></g></svg>
<svg style="left:663.5px;top:685px;filter:drop-shadow(0 .6px .8px rgba(0,0,0,.28))" width="25" height="22.6" viewBox="0 0 50 45" preserveAspectRatio="none"><g clip-path="url(#rsq)"><rect width="50" height="45" fill="url(#dg18)"/><ellipse cx="25" cy="23" rx="16.500" ry="15" fill="none" stroke="#cfcfd4" stroke-width="3.400"/><ellipse cx="25" cy="23" rx="11.500" ry="10.400" fill="none" stroke="#bdbdc2" stroke-width="1.400"/><ellipse cx="25" cy="23" rx="3" ry="2.700" fill="#d6d6da"/><path d="M25 23 25 9M25 23 38 30M25 23 12 30" stroke="#d0d0d4" stroke-width="1.700"/></g></svg>
<div class="abs" style="left:679.7px;top:682.8px;width:11.6px;height:10.4px;border-radius:50%;background:#ff3b30;color:#fff;font-size:7px;font-weight:bold;text-align:center;line-height:10.400px">1</div>
<div class="abs" style="left:702px;top:682.5px;width:1px;height:28px;background:rgba(40,70,70,.45)"></div>
<svg style="left:714.5px;top:685px;filter:drop-shadow(0 .6px .8px rgba(0,0,0,.28))" width="25" height="22.6" viewBox="0 0 50 45" preserveAspectRatio="none"><g clip-path="url(#rsq)"><rect width="50" height="45" fill="#fdfdfd"/><path d="M25 22.500L8.98 14.10A18.5 16.8 0 0 1 41.02 14.10z" fill="#ea4335"/><path d="M25 22.500L41.02 14.10A18.5 16.8 0 0 1 25.00 39.30z" fill="#fbbc05"/><path d="M25 22.500L25.00 39.30A18.5 16.8 0 0 1 8.98 14.10z" fill="#34a853"/><ellipse cx="25" cy="22.500" rx="8.800" ry="8" fill="#fff"/><ellipse cx="25" cy="22.500" rx="6.900" ry="6.300" fill="#4285f4"/></g></svg>
<div class="abs" style="left:725.9px;top:711.6px;width:2.2px;height:2px;background:#0c0c0c;border-radius:50%"></div>
<svg style="left:748.5px;top:685px;filter:drop-shadow(0 .6px .8px rgba(0,0,0,.28))" width="25" height="22.6" viewBox="0 0 50 45" preserveAspectRatio="none"><g clip-path="url(#rsq)"><rect width="50" height="45" fill="url(#dg19)"/><path d="M25 7 41 14.500 25 22.500 9 14.500z" fill="#e9e9e9"/><path d="M9 14.500 25 22.500V39L9 31z" fill="#7f7f7f"/><path d="M41 14.500 25 22.500V39L41 31z" fill="#474747"/><path d="M25 12 33 15.500 25 19.500 17 15.500z" fill="#2a2826" opacity=".45"/></g></svg>
<div class="abs" style="left:759.9px;top:711.6px;width:2.2px;height:2px;background:#0c0c0c;border-radius:50%"></div>
<svg style="left:784.1px;top:685px;filter:drop-shadow(0 .6px .8px rgba(0,0,0,.28))" width="25" height="22.6" viewBox="0 0 50 45" preserveAspectRatio="none"><g clip-path="url(#rsq)"><rect width="50" height="45" fill="url(#dg6)"/><path d="M25 9.500A13 11.800 0 1 1 18 31.500L11.500 33.500 13.800 27.800A13 11.800 0 0 1 25 9.500z" fill="none" stroke="#fff" stroke-width="2.600" stroke-linejoin="round"/><path d="M20.500 15.500c-.8.500-1.500 1.500-1.300 2.800.5 2.800 3 6.200 6.300 8 1.400.7 2.700.5 3.400-.3l.7-.9c.3-.5.100-1-.4-1.300l-2.100-1.100c-.5-.2-1-.1-1.300.3l-.6.700c-1.600-.8-3-2.300-3.700-3.900l.8-.6c.4-.3.5-.8.300-1.200l-.9-2.100c-.2-.5-.7-.7-1.200-.4z" fill="#fff"/></g></svg>
<div class="abs" style="left:795.5px;top:711.6px;width:2.2px;height:2px;background:#0c0c0c;border-radius:50%"></div>
<svg style="left:819.1px;top:685px;filter:drop-shadow(0 .6px .8px rgba(0,0,0,.28))" width="25" height="22.6" viewBox="0 0 50 45" preserveAspectRatio="none"><g clip-path="url(#rsq)"><rect width="50" height="45" fill="url(#dg20)"/><path d="M13 37.500 31.500 15.500" stroke="#26262c" stroke-width="4.600" stroke-linecap="round"/><g transform="rotate(32 33 12)"><rect x="22.500" y="7.500" width="21" height="8.500" rx="2" fill="#3a3a44"/><rect x="22.500" y="7.500" width="21" height="3" rx="1.500" fill="#6a6a78"/></g></g></svg>
<div class="abs" style="left:830.5px;top:711.6px;width:2.2px;height:2px;background:#0c0c0c;border-radius:50%"></div>
<svg style="left:854.3px;top:685px;filter:drop-shadow(0 .6px .8px rgba(0,0,0,.28))" width="25" height="22.6" viewBox="0 0 50 45" preserveAspectRatio="none"><g clip-path="url(#rsq)"><rect width="50" height="45" fill="url(#dg21)"/><g transform="translate(25 22.500) scale(1.220) translate(-25.300 -22)"><path d="M20.500 8.500h5v9h-5a4.800 4.500 0 0 1 0-9z" fill="#f24e1e"/><path d="M25.500 8.500h4.500a4.800 4.500 0 0 1 0 9h-4.500z" fill="#ff7262"/><path d="M20.500 17.500h5v9h-5a4.800 4.500 0 0 1 0-9z" fill="#a259ff"/><ellipse cx="30.200" cy="22" rx="4.800" ry="4.500" fill="#1abcfe"/><path d="M20.500 26.500h5v4.500a4.900 4.500 0 1 1-5-4.500z" fill="#0acf83"/></g></g></svg>
<div class="abs" style="left:865.7px;top:711.6px;width:2.2px;height:2px;background:#0c0c0c;border-radius:50%"></div>
<svg style="left:888.5px;top:685px;filter:drop-shadow(0 .6px .8px rgba(0,0,0,.28))" width="25" height="22.6" viewBox="0 0 50 45" preserveAspectRatio="none"><g clip-path="url(#rsq)"><rect width="50" height="45" fill="url(#dg22)"/><path d="M0 11.500H50M0 17.500H50M0 23.500H50M0 29.500H50M0 35.500H50" stroke="#f0d2d8" stroke-width="1.200"/><path d="M12.500 0V45" stroke="#f2a6ae" stroke-width="1.200"/></g></svg>
<div class="abs" style="left:899.9px;top:711.6px;width:2.2px;height:2px;background:#0c0c0c;border-radius:50%"></div>
<svg style="left:923.5px;top:685px;filter:drop-shadow(0 .6px .8px rgba(0,0,0,.28))" width="25" height="22.6" viewBox="0 0 50 45" preserveAspectRatio="none"><g clip-path="url(#rsq)"><rect width="50" height="45" fill="url(#dg24)"/><ellipse cx="24.500" cy="21.500" rx="13.500" ry="12.300" fill="#bfe2ff" stroke="url(#dg23)" stroke-width="8"/><path d="M30 26.500 41 36.500" stroke="#0b5fe2" stroke-width="7.500" stroke-linecap="round"/><ellipse cx="24.500" cy="21.500" rx="7" ry="6.300" fill="#eef8ff"/></g></svg>
<div class="abs" style="left:934.9px;top:711.6px;width:2.2px;height:2px;background:#0c0c0c;border-radius:50%"></div>
<svg style="left:955.5px;top:682.8px;filter:drop-shadow(0 .6px .8px rgba(0,0,0,.28))" width="31" height="27" viewBox="0 0 62 54" preserveAspectRatio="none"><g><ellipse cx="31" cy="27" rx="31" ry="27" fill="#fff"/><rect x="20" y="10.500" width="23" height="33" rx="3" fill="#dfeafc" stroke="#2f6fe8" stroke-width="3.200"/><path d="M22 17a10 10 0 0 0 0 20z" fill="#3ddc84" transform="translate(3 0)"/><rect x="27" y="17" width="9" height="20" fill="#a7e8c3" opacity=".7"/></g></svg>
<div class="abs" style="left:969.9px;top:711.6px;width:2.2px;height:2px;background:#0c0c0c;border-radius:50%"></div>
<svg style="left:993.5px;top:685px;filter:drop-shadow(0 .6px .8px rgba(0,0,0,.28))" width="25" height="22.6" viewBox="0 0 50 45" preserveAspectRatio="none"><g clip-path="url(#rsq)"><rect width="50" height="45" fill="url(#dg25)"/><rect x=".7" y=".7" width="48.600" height="43.600" rx="10.500" fill="none" stroke="#4a4a4c" stroke-width="1.400"/><path d="M10 11.500 16.500 15.500 10 19.500" fill="none" stroke="#fff" stroke-width="2"/><path d="M18.500 21H26" stroke="#fff" stroke-width="2"/></g></svg>
<div class="abs" style="left:1004.9px;top:711.6px;width:2.2px;height:2px;background:#0c0c0c;border-radius:50%"></div>
<div class="abs" style="left:1031.5px;top:682.5px;width:1px;height:28px;background:rgba(50,70,55,.5)"></div>
<svg style="left:1047.500px;top:683.700px;filter:drop-shadow(0 .6px .8px rgba(0,0,0,.3))" width="19.500" height="25" viewBox="0 0 39 50"><path d="M3 0H27L39 12V47a3 3 0 0 1-3 3H3a3 3 0 0 1-3-3V3A3 3 0 0 1 3 0z" fill="#f6f6f4"/><path d="M27 0 39 12H30a3 3 0 0 1-3-3z" fill="#d8d8d4"/><rect x="10" y="17" width="18" height="16" rx="4" fill="#141414"/><circle cx="17" cy="22" r="2.200" fill="#f24e1e"/><circle cx="21" cy="22" r="2.200" fill="#ff7262"/><circle cx="17" cy="25.500" r="2.200" fill="#a259ff"/><circle cx="21" cy="25.500" r="2.200" fill="#1abcfe"/><circle cx="17" cy="29" r="2.200" fill="#0acf83"/><rect x="13" y="39" width="12" height="2.500" fill="#c4c4c0"/></svg>
<div class="abs" style="left:1076.8px;top:688.3px;width:30.2px;height:16.7px;box-shadow:0 .6px 1.500px rgba(0,0,0,.35);background:#fafafa"><div class="abs" style="left:3px;top:2px;width:9px;height:12px;background:repeating-linear-gradient(180deg,#c8c8c8 0 1px,transparent 1px 2.400px)"></div><div class="abs" style="left:16px;top:2px;width:11px;height:9px;background:repeating-linear-gradient(180deg,#d2d2d2 0 1px,transparent 1px 2.400px)"></div></div>
<div class="abs" style="left:1096.8px;top:700.2px;width:9.6px;height:8.8px;border-radius:2.200px;background:linear-gradient(180deg,#ffd84a 0 28%,#fbfbf7 28% 100%);box-shadow:0 .6px 1.500px rgba(0,0,0,.35);"></div>
<div class="abs" style="left:1111.8px;top:688.3px;width:30.2px;height:16.7px;box-shadow:0 .6px 1.500px rgba(0,0,0,.35);background:#fbfbfb"><div class="abs" style="left:11px;top:3px;width:5px;height:8px;background:repeating-linear-gradient(180deg,#cfcfcf 0 1px,transparent 1px 2.400px)"></div></div>
<div class="abs" style="left:1131.3px;top:700.2px;width:9.8px;height:8.8px;border-radius:2.200px;background:linear-gradient(180deg,#31b2ff,#1467ea);box-shadow:0 .6px 1.500px rgba(0,0,0,.35);"><div class="abs" style="left:2px;top:3.600px;width:6px;height:1.300px;background:#222;transform:rotate(-42deg)"></div></div>
<div class="abs" style="left:1146px;top:688.3px;width:31px;height:16.7px;box-shadow:0 .6px 1.500px rgba(0,0,0,.35);background:#0a0a0a"><div class="abs" style="left:0;top:0;width:31px;height:1.500px;background:#e8e8e8"></div><div class="abs" style="left:24px;top:1.500px;width:7px;height:12px;background:#eee"></div><div class="abs" style="left:0;top:13.500px;width:31px;height:3.200px;background:#f4f4f4"></div><div class="abs" style="left:4px;top:14.700px;width:16px;height:.8px;background:#888"></div></div>
<svg style="left:1166px;top:699.800px" width="10" height="9.200" viewBox="0 0 10 9.200"><path d="M5 4.6L0.67 2.30A5 4.6 0 0 1 9.33 2.30z" fill="#ea4335"/><path d="M5 4.6L9.33 2.30A5 4.6 0 0 1 5.00 9.20z" fill="#fbbc05"/><path d="M5 4.6L5.00 9.20A5 4.6 0 0 1 0.67 2.30z" fill="#34a853"/><ellipse cx="5" cy="4.600" rx="2.400" ry="2.200" fill="#fff"/><ellipse cx="5" cy="4.600" rx="1.800" ry="1.650" fill="#4285f4"/></svg>
<div class="abs" style="left:1181.6px;top:689.7px;width:30.6px;height:13.8px;box-shadow:0 .6px 1.500px rgba(0,0,0,.35);background:#fbfbfb"><div class="abs" style="left:3px;top:3px;width:6px;height:7px;background:repeating-linear-gradient(180deg,#d4d4d4 0 1px,transparent 1px 2.400px)"></div></div>
<div class="abs" style="left:1201.3px;top:700.2px;width:9.8px;height:8.8px;border-radius:2.200px;background:linear-gradient(180deg,#35b4ff,#1a78ee);box-shadow:0 .6px 1.500px rgba(0,0,0,.35);"><div class="abs" style="left:3.300px;top:2px;width:3.200px;height:4.800px;border-radius:1.500px;background:#cfe8ff"></div></div>
<svg style="left:1219.500px;top:683.500px" width="25" height="25" viewBox="0 0 50 50"><path d="M2 9H48L42 46a3 3 0 0 1-3 2.500H11A3 3 0 0 1 8 46z" fill="rgba(225,232,228,.62)" stroke="rgba(245,248,246,.75)" stroke-width="1.200"/><ellipse cx="25" cy="9" rx="23.500" ry="4" fill="rgba(235,240,236,.8)"/><path d="M4 7 10 3 17 7.500z" fill="#e8e8e8"/><path d="M10 6.500 17 2 22 7.500z" fill="#3b8ef0"/><path d="M20 7 27 1.500 31 8z" fill="#f4c430"/><path d="M29 7.500 36 2.500 41 7.500z" fill="#3fa0f5"/><circle cx="33" cy="5.500" r="2.200" fill="#e8453c"/><path d="M17 16 19 42M25 16V42M33 16 31 42" stroke="rgba(150,165,158,.55)" stroke-width="1.300"/></svg>
<div class="abs" style="left:1229.500px;top:696.300px;font-size:13px;line-height:15px;color:rgba(255,255,255,.72);letter-spacing:.6px;white-space:nowrap">ûdemy</div>
</div>
</body></html>
